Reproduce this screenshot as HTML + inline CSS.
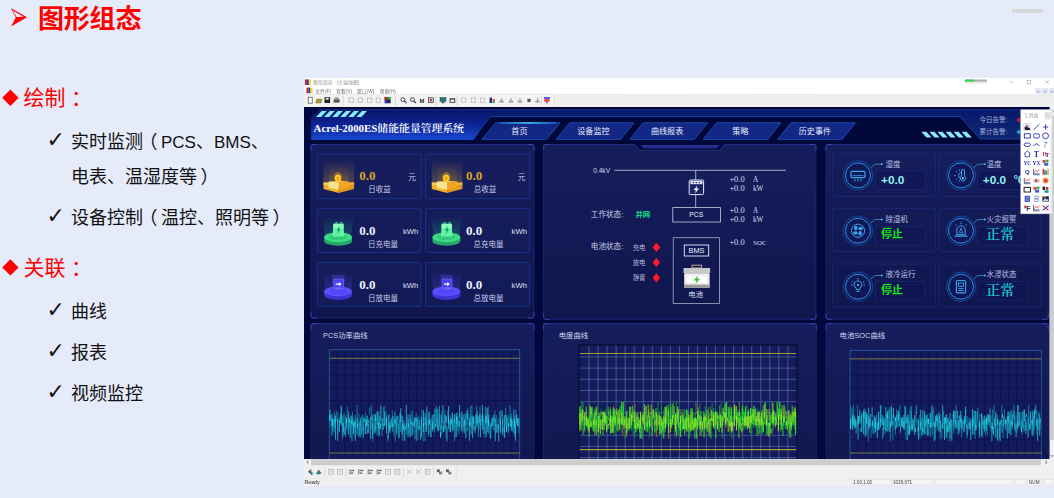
<!DOCTYPE html>
<html lang="zh-CN"><head><meta charset="utf-8"><title>图形组态</title>
<style>
html,body{margin:0;padding:0}
body{width:1054px;height:498px;overflow:hidden;position:relative;background:#e6ebfa;
 font-family:"Liberation Sans","Noto Sans CJK SC",sans-serif;color:#111}
.t{position:absolute;white-space:nowrap;line-height:1}
.h1{left:38px;top:5.5px;font-size:26px;font-weight:bold;color:#ff0000;letter-spacing:-0.2px}
.h2{left:23.5px;font-size:21px;color:#ff0000}
.li{left:71px;font-size:18px;color:#111}
.ck{left:46.5px;font-size:22px;color:#111;font-family:"DejaVu Sans",sans-serif}
.la{font-size:17px}
.pl{position:relative;left:-3.5px}
.pr{position:relative;left:3.5px}
.co{position:relative;left:5.5px}
</style></head><body>
<svg width="40" height="40" viewBox="0 0 40 40" style="position:absolute;left:0;top:0">
 <path d="M11,8.2 L27,17.2 L11,26.6 L15.8,17.4 Z" fill="#ff0000"/>
 <path d="M12.6,10.6 L23.6,16.8 L16.6,16.9 Z" fill="#e6ebfa"/>
</svg>
<div class="t h1">图形组态</div>

<svg width="22" height="200" viewBox="0 0 22 200" style="position:absolute;left:0;top:80px">
 <path d="M10.4,9.6 L18.6,17.8 L10.4,26 L2.2,17.8 Z" fill="#ff0000"/>
 <path d="M10.4,179.2 L18.6,187.4 L10.4,195.6 L2.2,187.4 Z" fill="#ff0000"/>
</svg>
<div class="t h2" style="top:86.5px">绘制<span class="co">：</span></div>
<div class="t ck" style="top:128.5px">✓</div>
<div class="t li" style="top:132.5px">实时监测<span class="pl">（</span><span class="la">PCS</span>、<span class="la">BMS</span>、</div>
<div class="t li" style="top:168.0px">电表、温湿度等<span class="pr">）</span></div>
<div class="t ck" style="top:205.0px">✓</div>
<div class="t li" style="top:209.0px">设备控制<span class="pl">（</span>温控、照明等<span class="pr">）</span></div>
<div class="t h2" style="top:257px">关联<span class="co">：</span></div>
<div class="t ck" style="top:298.5px">✓</div>
<div class="t li" style="top:302.5px">曲线</div>
<div class="t ck" style="top:339.5px">✓</div>
<div class="t li" style="top:343.5px">报表</div>
<div class="t ck" style="top:380.5px">✓</div>
<div class="t li" style="top:384.5px">视频监控</div>
<svg width="1054" height="498" viewBox="0 0 1054 498" style="position:absolute;left:0;top:0;filter:blur(0.35px)">
<defs>
<linearGradient id="gBanner" x1="0" y1="0" x2="0" y2="1">
 <stop offset="0" stop-color="#081264"/><stop offset="0.5" stop-color="#0c2494"/><stop offset="1" stop-color="#1a46d0"/>
</linearGradient>
<linearGradient id="gTop" x1="0" y1="0" x2="0" y2="1">
 <stop offset="0" stop-color="#0a1870"/><stop offset="1" stop-color="#0c1c78"/>
</linearGradient>
<linearGradient id="gAlarm" x1="0" y1="0" x2="0" y2="1">
 <stop offset="0" stop-color="#08186c"/><stop offset="0.25" stop-color="#0a1c6e"/><stop offset="1" stop-color="#0e2674"/>
</linearGradient>
<linearGradient id="gGold" x1="0" y1="0" x2="0" y2="1">
 <stop offset="0" stop-color="#f0b020" stop-opacity="0"/><stop offset="1" stop-color="#f0b020" stop-opacity="0.27"/>
</linearGradient>
<linearGradient id="gGreen" x1="0" y1="0" x2="0" y2="1">
 <stop offset="0" stop-color="#20e090" stop-opacity="0"/><stop offset="1" stop-color="#20c090" stop-opacity="0.28"/>
</linearGradient>
<linearGradient id="gBlue" x1="0" y1="0" x2="0" y2="1">
 <stop offset="0" stop-color="#6050ff" stop-opacity="0"/><stop offset="1" stop-color="#6050ff" stop-opacity="0.3"/>
</linearGradient>
<linearGradient id="gTabTop" x1="0" y1="0" x2="1" y2="0">
 <stop offset="0" stop-color="#2060d0"/><stop offset="0.5" stop-color="#40d0ff"/><stop offset="1" stop-color="#2060d0"/>
</linearGradient>
<linearGradient id="gPanel" gradientUnits="userSpaceOnUse" x1="0" y1="144.5" x2="0" y2="319.3">
 <stop offset="0" stop-color="#151d5c"/><stop offset="1" stop-color="#10164d"/>
</linearGradient>
<linearGradient id="gPanel2" gradientUnits="userSpaceOnUse" x1="0" y1="323.6" x2="0" y2="498.4">
 <stop offset="0" stop-color="#151d5c"/><stop offset="1" stop-color="#10164d"/>
</linearGradient>
<clipPath id="clipContent"><rect x="304.6" y="107.2" width="744.9" height="351.8"/></clipPath>
</defs>
<rect x="1012.00" y="9.00" width="31.00" height="3.90" fill="#d8d8d8" />
<rect x="304.00" y="78.00" width="750.00" height="407.60" fill="#ffffff" />
<rect x="304.80" y="79.40" width="2.10" height="5.60" fill="#e02020" />
<rect x="306.80" y="79.40" width="2.10" height="5.60" fill="#1838d0" />
<rect x="308.80" y="79.40" width="2.10" height="5.60" fill="#f0e020" />
<text x="313.00" y="84.40" font-size="4.9" fill="#999999" font-family='"Liberation Sans","Noto Sans CJK SC",sans-serif' font-weight="normal" text-anchor="start" >图形组态 - [主接线图]</text>
<rect x="964.70" y="79.40" width="22.50" height="2.40" fill="#b0b0b0" rx="1.2" />
<rect x="964.70" y="79.40" width="9.80" height="2.40" fill="#3ad85a" rx="1.2" />
<rect x="965.50" y="82.00" width="22.00" height="2.00" fill="#000000" rx="1" opacity="0.07"/>
<line x1="1009.50" y1="82.00" x2="1013.20" y2="82.00" stroke="#b8b8b8" stroke-width="0.8" />
<rect x="1027.20" y="80.60" width="3.20" height="3.20" fill="none" stroke="#b0b0b0" stroke-width="0.7" />
<line x1="1045.20" y1="80.20" x2="1048.80" y2="83.80" stroke="#b0b0b0" stroke-width="0.7" />
<line x1="1048.80" y1="80.20" x2="1045.20" y2="83.80" stroke="#b0b0b0" stroke-width="0.7" />
<rect x="306.40" y="87.60" width="2.10" height="5.60" fill="#e02020" />
<rect x="308.40" y="87.60" width="2.10" height="5.60" fill="#1838d0" />
<rect x="310.40" y="87.60" width="2.10" height="5.60" fill="#f0e020" />
<text x="315.30" y="92.70" font-size="4.8" fill="#707070" font-family='"Liberation Sans","Noto Sans CJK SC",sans-serif' font-weight="normal" text-anchor="start" >文件(F)</text>
<text x="336.00" y="92.70" font-size="4.8" fill="#707070" font-family='"Liberation Sans","Noto Sans CJK SC",sans-serif' font-weight="normal" text-anchor="start" >查看(V)</text>
<text x="357.00" y="92.70" font-size="4.8" fill="#707070" font-family='"Liberation Sans","Noto Sans CJK SC",sans-serif' font-weight="normal" text-anchor="start" >窗口(W)</text>
<text x="379.70" y="92.70" font-size="4.8" fill="#707070" font-family='"Liberation Sans","Noto Sans CJK SC",sans-serif' font-weight="normal" text-anchor="start" >帮助(H)</text>
<rect x="1035.20" y="88.20" width="6.00" height="5.40" fill="#dfe4ee" />
<line x1="1037.00" y1="91.80" x2="1039.40" y2="91.80" stroke="#8090b8" stroke-width="0.8" />
<rect x="1042.00" y="88.20" width="6.00" height="5.40" fill="#dfe4ee" />
<line x1="1043.80" y1="91.80" x2="1046.20" y2="91.80" stroke="#8090b8" stroke-width="0.8" />
<rect x="1048.80" y="88.20" width="6.00" height="5.40" fill="#dfe4ee" />
<line x1="1050.60" y1="91.80" x2="1053.00" y2="91.80" stroke="#8090b8" stroke-width="0.8" />
<rect x="304.00" y="94.20" width="750.00" height="13.00" fill="#efefef" />
<rect x="304.00" y="94.60" width="250.00" height="12.20" fill="#f2f2f2" />
<line x1="304.00" y1="94.30" x2="1054.00" y2="94.30" stroke="#e2e2e2" stroke-width="0.6" />
<rect x="308.20" y="97.20" width="4.00" height="6.00" fill="#fff" stroke="#444" stroke-width="0.7" />
<polygon points="315.80,102.80 317.00,99.20 321.80,99.20 320.80,102.80" fill="#b89820" stroke="#554400" stroke-width="0.5" />
<rect x="324.50" y="97.20" width="5.60" height="5.80" fill="#222" />
<rect x="325.70" y="97.80" width="3.00" height="2.00" fill="#ddd" />
<rect x="333.60" y="99.20" width="6.00" height="3.40" fill="#555" />
<rect x="334.80" y="97.20" width="3.60" height="2.40" fill="#999" />
<rect x="349.10" y="98.00" width="4.20" height="4.40" fill="none" stroke="#b8b8b8" stroke-width="0.8" />
<rect x="358.10" y="98.00" width="4.20" height="4.40" fill="none" stroke="#b8b8b8" stroke-width="0.8" />
<rect x="367.60" y="98.00" width="4.20" height="4.40" fill="none" stroke="#b8b8b8" stroke-width="0.8" />
<rect x="376.20" y="98.00" width="4.20" height="4.40" fill="none" stroke="#b8b8b8" stroke-width="0.8" />
<rect x="384.60" y="97.20" width="6.00" height="6.00" fill="#223" />
<rect x="384.60" y="97.20" width="2.60" height="2.60" fill="#e02020" />
<rect x="387.80" y="97.20" width="2.80" height="2.60" fill="#20c040" />
<rect x="385.00" y="100.60" width="2.60" height="2.60" fill="#2040e0" />
<circle cx="402.9" cy="99.60000000000001" r="2" fill="#e8e8e8" stroke="#333" stroke-width="0.8"/>
<line x1="404.30" y1="101.00" x2="406.50" y2="103.20" stroke="#3030a0" stroke-width="1.2" />
<circle cx="412.4" cy="99.60000000000001" r="2" fill="#e8e8e8" stroke="#333" stroke-width="0.8"/>
<line x1="413.80" y1="101.00" x2="416.00" y2="103.20" stroke="#3030a0" stroke-width="1.2" />
<text x="419.50" y="102.80" font-size="6" fill="#222" font-family='"Liberation Sans","Noto Sans CJK SC",sans-serif' font-weight="bold" text-anchor="start" >M</text>
<rect x="428.40" y="97.80" width="5.20" height="4.80" fill="#c8c8d8" stroke="#333" stroke-width="0.7" />
<rect x="430.00" y="99.20" width="2.00" height="2.00" fill="#c03030" />
<rect x="440.00" y="97.60" width="6.00" height="3.80" fill="#108080" stroke="#333" stroke-width="0.5" />
<rect x="441.60" y="101.80" width="2.80" height="1.40" fill="#444" />
<rect x="449.60" y="98.20" width="5.60" height="4.80" fill="#444" />
<rect x="450.60" y="99.60" width="3.60" height="2.60" fill="#eee" />
<rect x="461.60" y="98.00" width="4.20" height="4.40" fill="none" stroke="#b8b8b8" stroke-width="0.8" />
<rect x="471.10" y="98.00" width="4.20" height="4.40" fill="none" stroke="#b8b8b8" stroke-width="0.8" />
<rect x="480.60" y="98.00" width="4.20" height="4.40" fill="none" stroke="#b8b8b8" stroke-width="0.8" />
<rect x="489.60" y="97.60" width="2.40" height="5.40" fill="#183080" />
<rect x="492.60" y="99.20" width="2.40" height="2.00" fill="#e04020" />
<rect x="492.60" y="101.40" width="2.40" height="1.60" fill="#20a040" />
<rect x="499.30" y="100.60" width="4.40" height="2.00" fill="#a0a0a0" />
<rect x="500.90" y="98.20" width="1.20" height="2.40" fill="#999" />
<rect x="508.80" y="100.60" width="4.40" height="2.00" fill="#a0a0a0" />
<rect x="510.40" y="98.20" width="1.20" height="2.40" fill="#999" />
<rect x="517.80" y="100.60" width="4.40" height="2.00" fill="#a0a0a0" />
<rect x="519.40" y="98.20" width="1.20" height="2.40" fill="#999" />
<rect x="527.40" y="98.80" width="3.20" height="3.20" fill="#555" />
<rect x="535.40" y="100.60" width="4.40" height="2.00" fill="#a0a0a0" />
<rect x="537.00" y="98.20" width="1.20" height="2.40" fill="#999" />
<rect x="543.90" y="97.20" width="6.00" height="1.60" fill="#3040d0" />
<rect x="544.30" y="99.20" width="5.20" height="2.40" fill="#e03030" />
<rect x="546.30" y="101.60" width="1.20" height="1.80" fill="#3040d0" />
<line x1="343.30" y1="96.00" x2="343.30" y2="106.00" stroke="#d0d0d0" stroke-width="0.8" />
<line x1="395.30" y1="96.00" x2="395.30" y2="106.00" stroke="#d0d0d0" stroke-width="0.8" />
<line x1="436.00" y1="96.00" x2="436.00" y2="106.00" stroke="#d0d0d0" stroke-width="0.8" />
<line x1="457.00" y1="96.00" x2="457.00" y2="106.00" stroke="#d0d0d0" stroke-width="0.8" />
<line x1="541.60" y1="96.00" x2="541.60" y2="106.00" stroke="#d0d0d0" stroke-width="0.8" />
<line x1="554.30" y1="94.80" x2="554.30" y2="107.00" stroke="#dcdcdc" stroke-width="0.8" />
<g clip-path="url(#clipContent)">
<rect x="304.00" y="107.00" width="750.00" height="353.00" fill="#01083c" />
<rect x="304.80" y="107.60" width="744.70" height="36.40" fill="#00083a" />
<polygon points="304.80,108.40 1049.50,108.40 1049.50,138.90 980.00,138.90 960.00,116.60 490.00,116.60 473.00,139.90 311.20,139.90 304.80,139.90" fill="url(#gAlarm)" />
<rect x="304.60" y="107.20" width="744.90" height="2.00" fill="#000536" />
<rect x="304.80" y="108.60" width="6.40" height="31.60" fill="#020840" />
<polygon points="304.80,108.40 319.60,108.40 311.20,118.40" fill="#020840" />
<polyline points="473,139.9 490,116.6 960,116.6 980,138.9 1049.5,138.9" fill="none" stroke="#144a9e" stroke-width="0.9"/>
<polygon points="311.20,117.80 318.50,109.20 495.00,109.20 490.00,116.60 473.00,139.90 311.20,139.90" fill="url(#gBanner)" />
<line x1="318.50" y1="109.80" x2="1049.50" y2="109.80" stroke="#0e3a8e" stroke-width="0.9" />
<polygon points="316.10,116.90 321.70,111.10 326.70,111.10 321.10,116.90" fill="#82efff" />
<polygon points="324.16,116.90 329.76,111.10 334.76,111.10 329.16,116.90" fill="#82efff" />
<polygon points="332.22,116.90 337.82,111.10 342.82,111.10 337.22,116.90" fill="#82efff" />
<polygon points="340.28,116.90 345.88,111.10 350.88,111.10 345.28,116.90" fill="#82efff" />
<polygon points="348.34,116.90 353.94,111.10 358.94,111.10 353.34,116.90" fill="#82efff" />
<polygon points="356.40,116.90 362.00,111.10 367.00,111.10 361.40,116.90" fill="#82efff" />
<text x="313.60" y="131.90" font-size="10.6" fill="#ffffff" font-family='"Liberation Serif","Noto Serif CJK SC",serif' font-weight="600" text-anchor="start" textLength="150.6" lengthAdjust="spacingAndGlyphs">Acrel-2000ES储能能量管理系统</text>
<polygon points="482.00,139.40 495.60,122.80 560.00,122.80 546.60,139.40" fill="#122884" stroke="#1c54bc" stroke-width="0.8" />
<rect x="500.00" y="122.20" width="56.00" height="1.50" fill="url(#gTabTop)" />
<text x="519.40" y="134.40" font-size="8.1" fill="#e8ecff" font-family='"Liberation Sans","Noto Sans CJK SC",sans-serif' font-weight="normal" text-anchor="middle" >首页</text>
<polygon points="556.00,139.40 569.60,122.80 634.00,122.80 620.60,139.40" fill="#122884" stroke="#1c54bc" stroke-width="0.8" />
<text x="593.40" y="134.40" font-size="8.1" fill="#e8ecff" font-family='"Liberation Sans","Noto Sans CJK SC",sans-serif' font-weight="normal" text-anchor="middle" >设备监控</text>
<polygon points="629.70,139.40 643.30,122.80 707.70,122.80 694.30,139.40" fill="#122884" stroke="#1c54bc" stroke-width="0.8" />
<text x="667.10" y="134.40" font-size="8.1" fill="#e8ecff" font-family='"Liberation Sans","Noto Sans CJK SC",sans-serif' font-weight="normal" text-anchor="middle" >曲线报表</text>
<polygon points="703.00,139.40 716.60,122.80 781.00,122.80 767.60,139.40" fill="#122884" stroke="#1c54bc" stroke-width="0.8" />
<text x="740.40" y="134.40" font-size="8.1" fill="#e8ecff" font-family='"Liberation Sans","Noto Sans CJK SC",sans-serif' font-weight="normal" text-anchor="middle" >策略</text>
<polygon points="777.50,139.40 791.10,122.80 855.50,122.80 842.10,139.40" fill="#122884" stroke="#1c54bc" stroke-width="0.8" />
<text x="814.90" y="134.40" font-size="8.1" fill="#e8ecff" font-family='"Liberation Sans","Noto Sans CJK SC",sans-serif' font-weight="normal" text-anchor="middle" >历史事件</text>
<polygon points="921.30,131.70 926.30,131.70 931.50,137.50 926.50,137.50" fill="#8ae8ff" />
<polygon points="929.36,131.70 934.36,131.70 939.56,137.50 934.56,137.50" fill="#8ae8ff" />
<polygon points="937.42,131.70 942.42,131.70 947.62,137.50 942.62,137.50" fill="#8ae8ff" />
<polygon points="945.48,131.70 950.48,131.70 955.68,137.50 950.68,137.50" fill="#8ae8ff" />
<polygon points="953.54,131.70 958.54,131.70 963.74,137.50 958.74,137.50" fill="#8ae8ff" />
<polygon points="961.60,131.70 966.60,131.70 971.80,137.50 966.80,137.50" fill="#8ae8ff" />
<text x="979.40" y="122.10" font-size="6.5" fill="#a8b0dc" font-family='"Liberation Sans","Noto Sans CJK SC",sans-serif' font-weight="normal" text-anchor="start" >今日告警:</text>
<text x="979.40" y="134.20" font-size="6.5" fill="#a8b0dc" font-family='"Liberation Sans","Noto Sans CJK SC",sans-serif' font-weight="normal" text-anchor="start" >累计告警:</text>
<line x1="1016.50" y1="120.00" x2="1021.30" y2="120.00" stroke="#ff2020" stroke-width="1" />
<line x1="1018.90" y1="117.60" x2="1018.90" y2="122.40" stroke="#ff2020" stroke-width="1" />
<line x1="1016.50" y1="132.00" x2="1021.30" y2="132.00" stroke="#20e0e0" stroke-width="1" />
<line x1="1018.90" y1="129.60" x2="1018.90" y2="134.40" stroke="#20e0e0" stroke-width="1" />
<rect x="311.00" y="144.50" width="223.00" height="173.50" fill="url(#gPanel)" stroke="#1c2878" stroke-width="0.8" rx="2" />
<line x1="313.00" y1="144.70" x2="532.00" y2="144.70" stroke="#26348e" stroke-width="0.8" />
<path d="M317.00,144.50 H313.00 Q311.00,144.50 311.00,146.50 V150.50" fill="none" stroke="#3a48b0" stroke-width="0.9"/>
<path d="M528.00,144.50 H532.00 Q534.00,144.50 534.00,146.50 V150.50" fill="none" stroke="#3a48b0" stroke-width="0.9"/>
<path d="M317.00,318.00 H313.00 Q311.00,318.00 311.00,316.00 V312.00" fill="none" stroke="#3a48b0" stroke-width="0.9"/>
<path d="M528.00,318.00 H532.00 Q534.00,318.00 534.00,316.00 V312.00" fill="none" stroke="#3a48b0" stroke-width="0.9"/>
<rect x="543.60" y="144.50" width="272.40" height="174.80" fill="url(#gPanel)" stroke="#1c2878" stroke-width="0.8" rx="2" />
<line x1="545.60" y1="144.70" x2="814.00" y2="144.70" stroke="#26348e" stroke-width="0.8" />
<path d="M549.60,144.50 H545.60 Q543.60,144.50 543.60,146.50 V150.50" fill="none" stroke="#3a48b0" stroke-width="0.9"/>
<path d="M810.00,144.50 H814.00 Q816.00,144.50 816.00,146.50 V150.50" fill="none" stroke="#3a48b0" stroke-width="0.9"/>
<path d="M549.60,319.30 H545.60 Q543.60,319.30 543.60,317.30 V313.30" fill="none" stroke="#3a48b0" stroke-width="0.9"/>
<path d="M810.00,319.30 H814.00 Q816.00,319.30 816.00,317.30 V313.30" fill="none" stroke="#3a48b0" stroke-width="0.9"/>
<rect x="826.00" y="144.50" width="222.20" height="174.80" fill="url(#gPanel)" stroke="#1c2878" stroke-width="0.8" rx="2" />
<line x1="828.00" y1="144.70" x2="1046.20" y2="144.70" stroke="#26348e" stroke-width="0.8" />
<path d="M832.00,144.50 H828.00 Q826.00,144.50 826.00,146.50 V150.50" fill="none" stroke="#3a48b0" stroke-width="0.9"/>
<path d="M1042.20,144.50 H1046.20 Q1048.20,144.50 1048.20,146.50 V150.50" fill="none" stroke="#3a48b0" stroke-width="0.9"/>
<path d="M832.00,319.30 H828.00 Q826.00,319.30 826.00,317.30 V313.30" fill="none" stroke="#3a48b0" stroke-width="0.9"/>
<path d="M1042.20,319.30 H1046.20 Q1048.20,319.30 1048.20,317.30 V313.30" fill="none" stroke="#3a48b0" stroke-width="0.9"/>
<rect x="311.00" y="323.60" width="223.00" height="146.40" fill="url(#gPanel2)" stroke="#1c2878" stroke-width="0.8" rx="2" />
<line x1="313.00" y1="323.80" x2="532.00" y2="323.80" stroke="#26348e" stroke-width="0.8" />
<path d="M317.00,323.60 H313.00 Q311.00,323.60 311.00,325.60 V329.60" fill="none" stroke="#3a48b0" stroke-width="0.9"/>
<path d="M528.00,323.60 H532.00 Q534.00,323.60 534.00,325.60 V329.60" fill="none" stroke="#3a48b0" stroke-width="0.9"/>
<path d="M317.00,470.00 H313.00 Q311.00,470.00 311.00,468.00 V464.00" fill="none" stroke="#3a48b0" stroke-width="0.9"/>
<path d="M528.00,470.00 H532.00 Q534.00,470.00 534.00,468.00 V464.00" fill="none" stroke="#3a48b0" stroke-width="0.9"/>
<rect x="543.60" y="323.60" width="272.70" height="146.40" fill="url(#gPanel2)" stroke="#1c2878" stroke-width="0.8" rx="2" />
<line x1="545.60" y1="323.80" x2="814.30" y2="323.80" stroke="#26348e" stroke-width="0.8" />
<path d="M549.60,323.60 H545.60 Q543.60,323.60 543.60,325.60 V329.60" fill="none" stroke="#3a48b0" stroke-width="0.9"/>
<path d="M810.30,323.60 H814.30 Q816.30,323.60 816.30,325.60 V329.60" fill="none" stroke="#3a48b0" stroke-width="0.9"/>
<path d="M549.60,470.00 H545.60 Q543.60,470.00 543.60,468.00 V464.00" fill="none" stroke="#3a48b0" stroke-width="0.9"/>
<path d="M810.30,470.00 H814.30 Q816.30,470.00 816.30,468.00 V464.00" fill="none" stroke="#3a48b0" stroke-width="0.9"/>
<rect x="826.00" y="323.60" width="222.20" height="146.40" fill="url(#gPanel2)" stroke="#1c2878" stroke-width="0.8" rx="2" />
<line x1="828.00" y1="323.80" x2="1046.20" y2="323.80" stroke="#26348e" stroke-width="0.8" />
<path d="M832.00,323.60 H828.00 Q826.00,323.60 826.00,325.60 V329.60" fill="none" stroke="#3a48b0" stroke-width="0.9"/>
<path d="M1042.20,323.60 H1046.20 Q1048.20,323.60 1048.20,325.60 V329.60" fill="none" stroke="#3a48b0" stroke-width="0.9"/>
<path d="M832.00,470.00 H828.00 Q826.00,470.00 826.00,468.00 V464.00" fill="none" stroke="#3a48b0" stroke-width="0.9"/>
<path d="M1042.20,470.00 H1046.20 Q1048.20,470.00 1048.20,468.00 V464.00" fill="none" stroke="#3a48b0" stroke-width="0.9"/>
<polygon points="634.40,143.60 725.20,143.60 719.20,150.00 640.40,150.00" fill="#01083c" />
<polyline points="634.4,144.5 640.2,150.1 719.4,150.1 725.2,144.5" fill="none" stroke="#1f2f86" stroke-width="0.9"/>
<polygon points="640.60,145.00 719.60,145.00 716.60,148.30 643.60,148.30" fill="#272f8c" />
<rect x="317.30" y="154.20" width="103.70" height="44.50" fill="#161e5e" stroke="#1d3896" stroke-width="0.8" rx="1.8" fill-opacity="0.6"/>
<rect x="323.50" y="158.90" width="30.6" height="24" fill="url(#gGold)"/>
<rect x="329.20" y="162.90" width="19.2" height="19" fill="url(#gGold)" opacity="0.6"/>
<polygon points="323.50,182.50 338.80,181.60 354.10,182.50 338.80,183.50" fill="#f8dc80" opacity="0.7"/>
<polygon points="323.50,182.50 338.80,183.50 338.80,192.90 323.50,188.90" fill="#eeb228" />
<polygon points="354.10,182.50 338.80,183.50 338.80,192.90 354.10,188.90" fill="#e0961a" />
<polygon points="323.50,182.50 338.80,183.50 338.80,186.10 323.50,184.70" fill="#f6d064" />
<polygon points="354.10,182.50 338.80,183.50 338.80,186.10 354.10,184.70" fill="#eeb43c" />
<polygon points="328.60,181.60 338.80,180.80 349.00,181.60 338.80,182.50" fill="#f4c646" />
<polygon points="328.60,181.60 338.80,182.50 338.80,189.80 328.60,188.00" fill="#f8e294" />
<polygon points="349.00,181.60 338.80,182.50 338.80,189.80 349.00,188.00" fill="#f2a422" />
<ellipse cx="337.90" cy="177.30" rx="4.2" ry="5.2" fill="#f8b820" opacity="0.35"/>
<ellipse cx="337.90" cy="178.30" rx="3.1" ry="3.7" fill="#ffc81e"/>
<ellipse cx="337.90" cy="178.30" rx="1.2" ry="1.9" fill="#f09a10"/>
<text x="359.30" y="180.40" font-size="13" fill="#d9a520" font-family='"Liberation Serif","Noto Serif CJK SC",serif' font-weight="bold" text-anchor="start" >0.0</text>
<text x="408.30" y="180.00" font-size="7.8" fill="#c2c7e6" font-family='"Liberation Sans","Noto Sans CJK SC",sans-serif' font-weight="normal" text-anchor="start" >元</text>
<text x="368.30" y="192.40" font-size="7.5" fill="#c6cbea" font-family='"Liberation Sans","Noto Sans CJK SC",sans-serif' font-weight="normal" text-anchor="start" >日收益</text>
<rect x="425.60" y="154.20" width="103.90" height="44.50" fill="#161e5e" stroke="#1d3896" stroke-width="0.8" rx="1.8" fill-opacity="0.6"/>
<rect x="431.80" y="158.90" width="30.6" height="24" fill="url(#gGold)"/>
<rect x="437.50" y="162.90" width="19.2" height="19" fill="url(#gGold)" opacity="0.6"/>
<polygon points="431.80,182.50 447.10,181.60 462.40,182.50 447.10,183.50" fill="#f8dc80" opacity="0.7"/>
<polygon points="431.80,182.50 447.10,183.50 447.10,192.90 431.80,188.90" fill="#eeb228" />
<polygon points="462.40,182.50 447.10,183.50 447.10,192.90 462.40,188.90" fill="#e0961a" />
<polygon points="431.80,182.50 447.10,183.50 447.10,186.10 431.80,184.70" fill="#f6d064" />
<polygon points="462.40,182.50 447.10,183.50 447.10,186.10 462.40,184.70" fill="#eeb43c" />
<polygon points="436.90,181.60 447.10,180.80 457.30,181.60 447.10,182.50" fill="#f4c646" />
<polygon points="436.90,181.60 447.10,182.50 447.10,189.80 436.90,188.00" fill="#f8e294" />
<polygon points="457.30,181.60 447.10,182.50 447.10,189.80 457.30,188.00" fill="#f2a422" />
<ellipse cx="446.20" cy="177.30" rx="4.2" ry="5.2" fill="#f8b820" opacity="0.35"/>
<ellipse cx="446.20" cy="178.30" rx="3.1" ry="3.7" fill="#ffc81e"/>
<ellipse cx="446.20" cy="178.30" rx="1.2" ry="1.9" fill="#f09a10"/>
<text x="466.00" y="180.40" font-size="13" fill="#d9a520" font-family='"Liberation Serif","Noto Serif CJK SC",serif' font-weight="bold" text-anchor="start" >0.0</text>
<text x="517.80" y="180.00" font-size="7.8" fill="#c2c7e6" font-family='"Liberation Sans","Noto Sans CJK SC",sans-serif' font-weight="normal" text-anchor="start" >元</text>
<text x="473.80" y="192.40" font-size="7.5" fill="#c6cbea" font-family='"Liberation Sans","Noto Sans CJK SC",sans-serif' font-weight="normal" text-anchor="start" >总收益</text>
<rect x="317.30" y="208.30" width="103.70" height="44.30" fill="#161e5e" stroke="#1d3896" stroke-width="0.8" rx="1.8" fill-opacity="0.6"/>
<polygon points="322.30,216.10 353.90,216.10 350.60,237.30 325.60,237.30" fill="url(#gGreen)" />
<ellipse cx="338.10" cy="240.90" rx="13.9" ry="4.9" fill="#26a868"/>
<rect x="324.20" y="237.30" width="27.8" height="3.6" fill="#26a868"/>
<ellipse cx="338.10" cy="237.30" rx="13.9" ry="4.9" fill="#3ddc86"/>
<ellipse cx="338.10" cy="237.10" rx="9" ry="2.9" fill="#35c87a"/>
<polygon points="333.40,223.70 343.40,223.70 344.30,236.40 332.50,236.40" fill="#62f2a6" />
<polygon points="333.40,223.70 343.40,223.70 343.70,228.30 333.10,228.30" fill="#8afac0" />
<rect x="335.50" y="221.90" width="1.80" height="1.80" fill="#34d88a" />
<rect x="340.30" y="221.90" width="1.80" height="1.80" fill="#34d88a" />
<polygon points="339.50,225.70 336.50,230.50 338.30,230.50 337.70,233.90 340.70,229.10 338.90,229.10" fill="#1f9c60" />
<text x="359.30" y="234.50" font-size="13" fill="#eef0ff" font-family='"Liberation Serif","Noto Serif CJK SC",serif' font-weight="bold" text-anchor="start" >0.0</text>
<text x="402.90" y="234.10" font-size="7.7" fill="#dde0f6" font-family='"Liberation Sans","Noto Sans CJK SC",sans-serif' font-weight="normal" text-anchor="start" >kWh</text>
<text x="367.90" y="246.70" font-size="7.5" fill="#c6cbea" font-family='"Liberation Sans","Noto Sans CJK SC",sans-serif' font-weight="normal" text-anchor="start" >日充电量</text>
<rect x="425.60" y="208.30" width="103.90" height="44.30" fill="#161e5e" stroke="#1d3896" stroke-width="0.8" rx="1.8" fill-opacity="0.6"/>
<polygon points="430.60,216.10 462.20,216.10 458.90,237.30 433.90,237.30" fill="url(#gGreen)" />
<ellipse cx="446.40" cy="240.90" rx="13.9" ry="4.9" fill="#26a868"/>
<rect x="432.50" y="237.30" width="27.8" height="3.6" fill="#26a868"/>
<ellipse cx="446.40" cy="237.30" rx="13.9" ry="4.9" fill="#3ddc86"/>
<ellipse cx="446.40" cy="237.10" rx="9" ry="2.9" fill="#35c87a"/>
<polygon points="441.70,223.70 451.70,223.70 452.60,236.40 440.80,236.40" fill="#62f2a6" />
<polygon points="441.70,223.70 451.70,223.70 452.00,228.30 441.40,228.30" fill="#8afac0" />
<rect x="443.80" y="221.90" width="1.80" height="1.80" fill="#34d88a" />
<rect x="448.60" y="221.90" width="1.80" height="1.80" fill="#34d88a" />
<polygon points="447.80,225.70 444.80,230.50 446.60,230.50 446.00,233.90 449.00,229.10 447.20,229.10" fill="#1f9c60" />
<text x="466.00" y="234.50" font-size="13" fill="#eef0ff" font-family='"Liberation Serif","Noto Serif CJK SC",serif' font-weight="bold" text-anchor="start" >0.0</text>
<text x="511.60" y="234.10" font-size="7.7" fill="#dde0f6" font-family='"Liberation Sans","Noto Sans CJK SC",sans-serif' font-weight="normal" text-anchor="start" >kWh</text>
<text x="473.60" y="246.70" font-size="7.5" fill="#c6cbea" font-family='"Liberation Sans","Noto Sans CJK SC",sans-serif' font-weight="normal" text-anchor="start" >总充电量</text>
<rect x="317.30" y="262.40" width="103.70" height="43.90" fill="#161e5e" stroke="#1d3896" stroke-width="0.8" rx="1.8" fill-opacity="0.6"/>
<polygon points="322.30,270.20 353.90,270.20 350.60,291.40 325.60,291.40" fill="url(#gBlue)" />
<ellipse cx="338.10" cy="295.00" rx="13.9" ry="4.9" fill="#4232d4"/>
<rect x="324.20" y="291.40" width="27.8" height="3.6" fill="#4232d4"/>
<ellipse cx="338.10" cy="291.40" rx="13.9" ry="4.9" fill="#5c4eff"/>
<ellipse cx="338.10" cy="291.20" rx="9" ry="2.9" fill="#5444f4"/>
<rect x="332.10" y="274.80" width="12.60" height="8.60" fill="#6a5cff" opacity="0.25"/>
<rect x="333.80" y="279.00" width="9.70" height="10.00" fill="#4c3ef2" stroke="#7a70ff" stroke-width="0.6" rx="0.6" />
<line x1="335.10" y1="288.00" x2="342.30" y2="288.00" stroke="#8a9cff" stroke-width="0.7" />
<path d="M335.70,283.50 h3.2 v-1.5 l2.6,2.1 l-2.6,2.1 v-1.5 h-3.2z" fill="#fff"/>
<text x="359.30" y="288.60" font-size="13" fill="#eef0ff" font-family='"Liberation Serif","Noto Serif CJK SC",serif' font-weight="bold" text-anchor="start" >0.0</text>
<text x="402.90" y="288.20" font-size="7.7" fill="#dde0f6" font-family='"Liberation Sans","Noto Sans CJK SC",sans-serif' font-weight="normal" text-anchor="start" >kWh</text>
<text x="367.90" y="300.80" font-size="7.5" fill="#c6cbea" font-family='"Liberation Sans","Noto Sans CJK SC",sans-serif' font-weight="normal" text-anchor="start" >日放电量</text>
<rect x="425.60" y="262.40" width="103.90" height="43.90" fill="#161e5e" stroke="#1d3896" stroke-width="0.8" rx="1.8" fill-opacity="0.6"/>
<polygon points="430.60,270.20 462.20,270.20 458.90,291.40 433.90,291.40" fill="url(#gBlue)" />
<ellipse cx="446.40" cy="295.00" rx="13.9" ry="4.9" fill="#4232d4"/>
<rect x="432.50" y="291.40" width="27.8" height="3.6" fill="#4232d4"/>
<ellipse cx="446.40" cy="291.40" rx="13.9" ry="4.9" fill="#5c4eff"/>
<ellipse cx="446.40" cy="291.20" rx="9" ry="2.9" fill="#5444f4"/>
<rect x="440.40" y="274.80" width="12.60" height="8.60" fill="#6a5cff" opacity="0.25"/>
<rect x="442.10" y="279.00" width="9.70" height="10.00" fill="#4c3ef2" stroke="#7a70ff" stroke-width="0.6" rx="0.6" />
<line x1="443.40" y1="288.00" x2="450.60" y2="288.00" stroke="#8a9cff" stroke-width="0.7" />
<path d="M444.00,283.50 h3.2 v-1.5 l2.6,2.1 l-2.6,2.1 v-1.5 h-3.2z" fill="#fff"/>
<text x="466.00" y="288.60" font-size="13" fill="#eef0ff" font-family='"Liberation Serif","Noto Serif CJK SC",serif' font-weight="bold" text-anchor="start" >0.0</text>
<text x="511.60" y="288.20" font-size="7.7" fill="#dde0f6" font-family='"Liberation Sans","Noto Sans CJK SC",sans-serif' font-weight="normal" text-anchor="start" >kWh</text>
<text x="473.60" y="300.80" font-size="7.5" fill="#c6cbea" font-family='"Liberation Sans","Noto Sans CJK SC",sans-serif' font-weight="normal" text-anchor="start" >总放电量</text>
<text x="593.20" y="172.70" font-size="6.6" fill="#d0d4ea" font-family='"Liberation Sans","Noto Sans CJK SC",sans-serif' font-weight="normal" text-anchor="start" >0.4kV</text>
<line x1="614.40" y1="170.30" x2="786.00" y2="170.30" stroke="#c8cce0" stroke-width="0.8" />
<line x1="695.70" y1="170.30" x2="695.70" y2="180.00" stroke="#c8cce0" stroke-width="0.8" />
<line x1="695.70" y1="194.60" x2="695.70" y2="207.60" stroke="#c8cce0" stroke-width="0.8" />
<rect x="689.20" y="180.00" width="14.40" height="14.60" fill="#1a2268" stroke="#e8ecff" stroke-width="1" rx="1.2" />
<rect x="690.40" y="181.00" width="12.00" height="3.20" fill="#e8ecff" />
<rect x="692.60" y="182.00" width="1.40" height="1.20" fill="#1a2268" />
<rect x="695.60" y="182.00" width="1.40" height="1.20" fill="#1a2268" />
<rect x="698.60" y="182.00" width="1.40" height="1.20" fill="#1a2268" />
<polygon points="697.40,185.60 693.60,190.20 696.00,190.20 695.00,193.40 699.00,188.60 696.60,188.60" fill="#fff" />
<rect x="672.80" y="207.60" width="47.70" height="14.40" fill="none" stroke="#c8cce0" stroke-width="0.8" />
<text x="696.20" y="217.40" font-size="6.8" fill="#f0f2ff" font-family='"Liberation Sans","Noto Sans CJK SC",sans-serif' font-weight="normal" text-anchor="middle" >PCS</text>
<text x="729.40" y="182.00" font-size="8.4" fill="#d8dcf0" font-family='"Liberation Serif","Noto Serif CJK SC",serif' font-weight="normal" text-anchor="start" >+0.0</text>
<text x="753.00" y="182.00" font-size="7.2" fill="#d8dcf0" font-family='"Liberation Serif","Noto Serif CJK SC",serif' font-weight="normal" text-anchor="start" >A</text>
<text x="729.40" y="190.70" font-size="8.4" fill="#d8dcf0" font-family='"Liberation Serif","Noto Serif CJK SC",serif' font-weight="normal" text-anchor="start" >+0.0</text>
<text x="753.00" y="190.70" font-size="7.2" fill="#d8dcf0" font-family='"Liberation Serif","Noto Serif CJK SC",serif' font-weight="normal" text-anchor="start" >kW</text>
<text x="729.40" y="213.30" font-size="8.4" fill="#d8dcf0" font-family='"Liberation Serif","Noto Serif CJK SC",serif' font-weight="normal" text-anchor="start" >+0.0</text>
<text x="753.00" y="213.30" font-size="7.2" fill="#d8dcf0" font-family='"Liberation Serif","Noto Serif CJK SC",serif' font-weight="normal" text-anchor="start" >A</text>
<text x="729.40" y="222.10" font-size="8.4" fill="#d8dcf0" font-family='"Liberation Serif","Noto Serif CJK SC",serif' font-weight="normal" text-anchor="start" >+0.0</text>
<text x="753.00" y="222.10" font-size="7.2" fill="#d8dcf0" font-family='"Liberation Serif","Noto Serif CJK SC",serif' font-weight="normal" text-anchor="start" >kW</text>
<text x="729.40" y="245.00" font-size="8.4" fill="#d8dcf0" font-family='"Liberation Serif","Noto Serif CJK SC",serif' font-weight="normal" text-anchor="start" >+0.0</text>
<text x="753.00" y="245.00" font-size="7" fill="#d8dcf0" font-family='"Liberation Serif","Noto Serif CJK SC",serif' font-weight="normal" text-anchor="start" >SOC</text>
<text x="590.80" y="216.50" font-size="7.6" fill="#ccd0ec" font-family='"Liberation Sans","Noto Sans CJK SC",sans-serif' font-weight="normal" text-anchor="start" >工作状态:</text>
<text x="635.40" y="217.40" font-size="7.4" fill="#10e088" font-family='"Liberation Sans","Noto Sans CJK SC",sans-serif' font-weight="bold" text-anchor="start" >并网</text>
<text x="590.80" y="248.80" font-size="7.6" fill="#ccd0ec" font-family='"Liberation Sans","Noto Sans CJK SC",sans-serif' font-weight="normal" text-anchor="start" >电池状态:</text>
<text x="632.70" y="249.70" font-size="6.4" fill="#b8bcdc" font-family='"Liberation Sans","Noto Sans CJK SC",sans-serif' font-weight="normal" text-anchor="start" >充电</text>
<polygon points="656.40,242.70 660.20,247.30 656.40,251.90 652.60,247.30" fill="#ff1a2a" />
<text x="632.70" y="264.90" font-size="6.4" fill="#b8bcdc" font-family='"Liberation Sans","Noto Sans CJK SC",sans-serif' font-weight="normal" text-anchor="start" >放电</text>
<polygon points="656.40,257.90 660.20,262.50 656.40,267.10 652.60,262.50" fill="#ff1a2a" />
<text x="632.70" y="280.20" font-size="6.4" fill="#b8bcdc" font-family='"Liberation Sans","Noto Sans CJK SC",sans-serif' font-weight="normal" text-anchor="start" >静置</text>
<polygon points="656.40,273.20 660.20,277.80 656.40,282.40 652.60,277.80" fill="#ff1a2a" />
<rect x="673.20" y="237.70" width="46.20" height="65.70" fill="none" stroke="#a8acc8" stroke-width="0.8" />
<rect x="684.30" y="245.00" width="24.40" height="11.00" fill="none" stroke="#e8ecff" stroke-width="0.9" />
<text x="696.50" y="253.40" font-size="7.4" fill="#f0f2ff" font-family='"Liberation Sans","Noto Sans CJK SC",sans-serif' font-weight="normal" text-anchor="middle" >BMS</text>
<rect x="692.00" y="265.20" width="9.60" height="2.80" fill="none" stroke="#b8a890" stroke-width="1" />
<rect x="683.50" y="268.00" width="26.70" height="5.20" fill="#c8c8c8" rx="0.8" />
<rect x="684.20" y="273.20" width="25.40" height="14.60" fill="#f2f2f2" rx="0.8" />
<rect x="684.20" y="284.60" width="25.40" height="3.20" fill="#9a9a9a" />
<rect x="686.40" y="275.20" width="20.80" height="8.60" fill="#ffffff" stroke="#d0d0d0" stroke-width="0.4" />
<polygon points="698.20,275.60 693.60,280.60 696.60,280.60 695.40,284.00 700.20,278.80 697.40,278.80" fill="#2fc030" />
<text x="695.70" y="297.30" font-size="7.4" fill="#dfe2f6" font-family='"Liberation Sans","Noto Sans CJK SC",sans-serif' font-weight="normal" text-anchor="middle" >电池</text>
<rect x="832.60" y="153.40" width="102.70" height="43.10" fill="none" stroke="#1a2c78" stroke-width="0.8" rx="1.6" />
<rect x="875.20" y="171.00" width="49.80" height="18.50" fill="#0e1450" stroke="#19297a" stroke-width="0.7" fill-opacity="0.45"/>
<circle cx="858.0" cy="175.4" r="14.7" fill="none" stroke="#124a9a" stroke-width="1"/>
<circle cx="858.0" cy="175.4" r="12.5" fill="#111858" stroke="#2b90e6" stroke-width="1"/>
<path d="M870.60,167.80 l3.2,-2.8 q0.9,-0.8 2,-0.8 h5.6" fill="none" stroke="#3a9cd0" stroke-width="0.8"/>
<circle cx="881.80" cy="164.20" r="0.9" fill="#58c8f0"/>
<rect x="851.00" y="171.40" width="14.00" height="6.20" fill="none" stroke="#3aa6ee" stroke-width="1.2" rx="1" />
<line x1="852.60" y1="175.60" x2="863.40" y2="175.60" stroke="#3aa6ee" stroke-width="0.8" />
<line x1="855.00" y1="179.00" x2="855.00" y2="181.40" stroke="#3aa6ee" stroke-width="1" />
<line x1="858.00" y1="179.00" x2="858.00" y2="181.40" stroke="#3aa6ee" stroke-width="1" />
<line x1="861.00" y1="179.00" x2="861.00" y2="181.40" stroke="#3aa6ee" stroke-width="1" />
<text x="885.40" y="166.80" font-size="7.5" fill="#bcc0e4" font-family='"Liberation Sans","Noto Sans CJK SC",sans-serif' font-weight="normal" text-anchor="start" >湿度</text>
<text x="881.00" y="183.80" font-size="11.8" fill="#92f2f2" font-family='"Liberation Sans","Noto Sans CJK SC",sans-serif' font-weight="bold" text-anchor="start" >+0.0</text>
<rect x="939.20" y="153.40" width="102.40" height="43.10" fill="none" stroke="#1a2c78" stroke-width="0.8" rx="1.6" />
<rect x="977.80" y="171.00" width="49.80" height="18.50" fill="#0e1450" stroke="#19297a" stroke-width="0.7" fill-opacity="0.45"/>
<circle cx="961.0" cy="175.4" r="14.7" fill="none" stroke="#124a9a" stroke-width="1"/>
<circle cx="961.0" cy="175.4" r="12.5" fill="#111858" stroke="#2b90e6" stroke-width="1"/>
<path d="M973.60,167.80 l3.2,-2.8 q0.9,-0.8 2,-0.8 h5.6" fill="none" stroke="#3a9cd0" stroke-width="0.8"/>
<circle cx="984.80" cy="164.20" r="0.9" fill="#58c8f0"/>
<path d="M961.50,171.00 a1.5,1.5 0 0 1 3,0 v4.9 a2.7,2.7 0 1 1 -3,0 z" fill="none" stroke="#3aa6ee" stroke-width="1"/>
<circle cx="963.00" cy="178.20" r="1.1" fill="#5ad0ff"/>
<path d="M960.80,172.40 a3.4,3.4 0 0 0 0,6.4" fill="none" stroke="#3aa6ee" stroke-width="1"/>
<line x1="957.15" y1="178.85" x2="956.02" y2="179.98" stroke="#3aa6ee" stroke-width="0.9" />
<line x1="955.80" y1="175.60" x2="954.20" y2="175.60" stroke="#3aa6ee" stroke-width="0.9" />
<line x1="957.15" y1="172.35" x2="956.02" y2="171.22" stroke="#3aa6ee" stroke-width="0.9" />
<line x1="959.60" y1="180.13" x2="959.32" y2="181.71" stroke="#3aa6ee" stroke-width="0.9" />
<line x1="959.60" y1="171.07" x2="959.32" y2="169.49" stroke="#3aa6ee" stroke-width="0.9" />
<text x="986.40" y="166.80" font-size="7.5" fill="#bcc0e4" font-family='"Liberation Sans","Noto Sans CJK SC",sans-serif' font-weight="normal" text-anchor="start" >温度</text>
<text x="982.80" y="183.80" font-size="11.8" fill="#92f2f2" font-family='"Liberation Sans","Noto Sans CJK SC",sans-serif' font-weight="bold" text-anchor="start" >+0.0</text>
<text x="1013.80" y="183.80" font-size="11" fill="#7ee8f0" font-family='"Liberation Sans","Noto Sans CJK SC",sans-serif' font-weight="bold" text-anchor="start" >℃</text>
<rect x="832.60" y="208.70" width="102.70" height="42.90" fill="none" stroke="#1a2c78" stroke-width="0.8" rx="1.6" />
<rect x="875.20" y="226.30" width="49.80" height="18.50" fill="#0e1450" stroke="#19297a" stroke-width="0.7" fill-opacity="0.45"/>
<circle cx="858.0" cy="230.7" r="14.7" fill="none" stroke="#124a9a" stroke-width="1"/>
<circle cx="858.0" cy="230.7" r="12.5" fill="#111858" stroke="#2b90e6" stroke-width="1"/>
<path d="M870.60,223.10 l3.2,-2.8 q0.9,-0.8 2,-0.8 h5.6" fill="none" stroke="#3a9cd0" stroke-width="0.8"/>
<circle cx="881.80" cy="219.50" r="0.9" fill="#58c8f0"/>
<circle cx="858.0" cy="230.7" r="6.6" fill="none" stroke="#3aa6ee" stroke-width="1"/>
<ellipse cx="860.6" cy="228.5" rx="2.3" ry="1.7" fill="#3aa6ee" transform="rotate(0 858.0 230.7)"/>
<ellipse cx="860.6" cy="228.5" rx="2.3" ry="1.7" fill="#3aa6ee" transform="rotate(90 858.0 230.7)"/>
<ellipse cx="860.6" cy="228.5" rx="2.3" ry="1.7" fill="#3aa6ee" transform="rotate(180 858.0 230.7)"/>
<ellipse cx="860.6" cy="228.5" rx="2.3" ry="1.7" fill="#3aa6ee" transform="rotate(270 858.0 230.7)"/>
<circle cx="858.0" cy="230.7" r="1" fill="#121a60"/>
<text x="885.40" y="222.10" font-size="7.5" fill="#bcc0e4" font-family='"Liberation Sans","Noto Sans CJK SC",sans-serif' font-weight="normal" text-anchor="start" >除湿机</text>
<text x="881.20" y="238.30" font-size="10.8" fill="#10ee10" font-family='"Liberation Sans","Noto Sans CJK SC",sans-serif' font-weight="bold" text-anchor="start" >停止</text>
<rect x="939.20" y="208.70" width="102.40" height="42.90" fill="none" stroke="#1a2c78" stroke-width="0.8" rx="1.6" />
<rect x="977.80" y="226.30" width="49.80" height="18.50" fill="#0e1450" stroke="#19297a" stroke-width="0.7" fill-opacity="0.45"/>
<circle cx="961.0" cy="230.7" r="14.7" fill="none" stroke="#124a9a" stroke-width="1"/>
<circle cx="961.0" cy="230.7" r="12.5" fill="#111858" stroke="#2b90e6" stroke-width="1"/>
<path d="M973.60,223.10 l3.2,-2.8 q0.9,-0.8 2,-0.8 h5.6" fill="none" stroke="#3a9cd0" stroke-width="0.8"/>
<circle cx="984.80" cy="219.50" r="0.9" fill="#58c8f0"/>
<path d="M956.8,234.7 v-4.6 a4.2,4.2 0 0 1 8.4,0 v4.6 z" fill="none" stroke="#3aa6ee" stroke-width="1"/>
<line x1="954.60" y1="236.10" x2="967.40" y2="236.10" stroke="#3aa6ee" stroke-width="1.3" />
<polygon points="961.00,228.10 959.20,232.70 962.80,232.70" fill="none" stroke="#3aa6ee" stroke-width="0.8" />
<line x1="961.00" y1="224.10" x2="961.00" y2="222.10" stroke="#3aa6ee" stroke-width="0.9" />
<line x1="956.76" y1="225.86" x2="955.34" y2="224.44" stroke="#3aa6ee" stroke-width="0.9" />
<line x1="965.24" y1="225.86" x2="966.66" y2="224.44" stroke="#3aa6ee" stroke-width="0.9" />
<text x="986.40" y="222.10" font-size="7.5" fill="#bcc0e4" font-family='"Liberation Sans","Noto Sans CJK SC",sans-serif' font-weight="normal" text-anchor="start" >火灾报警</text>
<text x="986.00" y="239.30" font-size="14.2" fill="#1fc4d2" font-family='"Liberation Serif","Noto Serif CJK SC",serif' font-weight="600" text-anchor="start" >正常</text>
<rect x="832.60" y="264.00" width="102.70" height="43.20" fill="none" stroke="#1a2c78" stroke-width="0.8" rx="1.6" />
<rect x="875.20" y="281.60" width="49.80" height="18.50" fill="#0e1450" stroke="#19297a" stroke-width="0.7" fill-opacity="0.45"/>
<circle cx="858.0" cy="286.7" r="14.7" fill="none" stroke="#124a9a" stroke-width="1"/>
<circle cx="858.0" cy="286.7" r="12.5" fill="#111858" stroke="#2b90e6" stroke-width="1"/>
<path d="M870.60,279.10 l3.2,-2.8 q0.9,-0.8 2,-0.8 h5.6" fill="none" stroke="#3a9cd0" stroke-width="0.8"/>
<circle cx="881.80" cy="275.50" r="0.9" fill="#58c8f0"/>
<path d="M856.2,289.7 v-1.6 a3.8,3.8 0 1 1 3.6,0 v1.6 z" fill="none" stroke="#3aa6ee" stroke-width="1"/>
<line x1="856.60" y1="291.50" x2="859.40" y2="291.50" stroke="#3aa6ee" stroke-width="0.9" />
<circle cx="858.0" cy="285.09999999999997" r="1" fill="#5ad0ff"/>
<line x1="858.00" y1="279.70" x2="858.00" y2="277.90" stroke="#3aa6ee" stroke-width="0.9" />
<line x1="853.32" y1="282.40" x2="851.76" y2="281.50" stroke="#3aa6ee" stroke-width="0.9" />
<line x1="862.68" y1="282.40" x2="864.24" y2="281.50" stroke="#3aa6ee" stroke-width="0.9" />
<line x1="852.60" y1="285.10" x2="850.80" y2="285.10" stroke="#3aa6ee" stroke-width="0.9" />
<line x1="863.40" y1="285.10" x2="865.20" y2="285.10" stroke="#3aa6ee" stroke-width="0.9" />
<text x="885.40" y="277.40" font-size="7.5" fill="#bcc0e4" font-family='"Liberation Sans","Noto Sans CJK SC",sans-serif' font-weight="normal" text-anchor="start" >液冷运行</text>
<text x="881.20" y="293.60" font-size="10.8" fill="#10ee10" font-family='"Liberation Sans","Noto Sans CJK SC",sans-serif' font-weight="bold" text-anchor="start" >停止</text>
<rect x="939.20" y="264.00" width="102.40" height="43.20" fill="none" stroke="#1a2c78" stroke-width="0.8" rx="1.6" />
<rect x="977.80" y="281.60" width="49.80" height="18.50" fill="#0e1450" stroke="#19297a" stroke-width="0.7" fill-opacity="0.45"/>
<circle cx="961.0" cy="286.7" r="14.7" fill="none" stroke="#124a9a" stroke-width="1"/>
<circle cx="961.0" cy="286.7" r="12.5" fill="#111858" stroke="#2b90e6" stroke-width="1"/>
<path d="M973.60,279.10 l3.2,-2.8 q0.9,-0.8 2,-0.8 h5.6" fill="none" stroke="#3a9cd0" stroke-width="0.8"/>
<circle cx="984.80" cy="275.50" r="0.9" fill="#58c8f0"/>
<rect x="956.40" y="280.50" width="9.20" height="12.40" fill="none" stroke="#3aa6ee" stroke-width="1.1" rx="1" />
<rect x="958.40" y="282.90" width="5.20" height="3.40" fill="none" stroke="#3aa6ee" stroke-width="0.9" />
<line x1="958.40" y1="288.50" x2="963.60" y2="288.50" stroke="#3aa6ee" stroke-width="0.9" />
<line x1="958.40" y1="290.50" x2="963.60" y2="290.50" stroke="#3aa6ee" stroke-width="0.9" />
<text x="986.40" y="277.40" font-size="7.5" fill="#bcc0e4" font-family='"Liberation Sans","Noto Sans CJK SC",sans-serif' font-weight="normal" text-anchor="start" >水浸状态</text>
<text x="986.00" y="294.60" font-size="14.2" fill="#1fc4d2" font-family='"Liberation Serif","Noto Serif CJK SC",serif' font-weight="600" text-anchor="start" >正常</text>
<text x="323.00" y="338.00" font-size="7.4" fill="#d4d8f0" font-family='"Liberation Sans","Noto Sans CJK SC",sans-serif' font-weight="normal" text-anchor="start" >PCS功率曲线</text>
<text x="558.70" y="338.00" font-size="7.4" fill="#d4d8f0" font-family='"Liberation Sans","Noto Sans CJK SC",sans-serif' font-weight="normal" text-anchor="start" >电度曲线</text>
<text x="839.60" y="338.00" font-size="7.4" fill="#d4d8f0" font-family='"Liberation Sans","Noto Sans CJK SC",sans-serif' font-weight="normal" text-anchor="start" >电池SOC曲线</text>
<rect x="329.30" y="349.70" width="190.40" height="112.30" fill="#141b5d" />
<line x1="337.20" y1="349.70" x2="337.20" y2="462.00" stroke="#0c114a" stroke-width="0.9" />
<line x1="345.13" y1="349.70" x2="345.13" y2="462.00" stroke="#0c114a" stroke-width="0.9" />
<line x1="353.06" y1="349.70" x2="353.06" y2="462.00" stroke="#0c114a" stroke-width="0.9" />
<line x1="360.99" y1="349.70" x2="360.99" y2="462.00" stroke="#0c114a" stroke-width="0.9" />
<line x1="368.92" y1="349.70" x2="368.92" y2="462.00" stroke="#0c114a" stroke-width="0.9" />
<line x1="376.85" y1="349.70" x2="376.85" y2="462.00" stroke="#0c114a" stroke-width="0.9" />
<line x1="384.78" y1="349.70" x2="384.78" y2="462.00" stroke="#0c114a" stroke-width="0.9" />
<line x1="392.71" y1="349.70" x2="392.71" y2="462.00" stroke="#0c114a" stroke-width="0.9" />
<line x1="400.64" y1="349.70" x2="400.64" y2="462.00" stroke="#0c114a" stroke-width="0.9" />
<line x1="408.57" y1="349.70" x2="408.57" y2="462.00" stroke="#0c114a" stroke-width="0.9" />
<line x1="416.50" y1="349.70" x2="416.50" y2="462.00" stroke="#0c114a" stroke-width="0.9" />
<line x1="424.43" y1="349.70" x2="424.43" y2="462.00" stroke="#0c114a" stroke-width="0.9" />
<line x1="432.36" y1="349.70" x2="432.36" y2="462.00" stroke="#0c114a" stroke-width="0.9" />
<line x1="440.29" y1="349.70" x2="440.29" y2="462.00" stroke="#0c114a" stroke-width="0.9" />
<line x1="448.22" y1="349.70" x2="448.22" y2="462.00" stroke="#0c114a" stroke-width="0.9" />
<line x1="456.15" y1="349.70" x2="456.15" y2="462.00" stroke="#0c114a" stroke-width="0.9" />
<line x1="464.08" y1="349.70" x2="464.08" y2="462.00" stroke="#0c114a" stroke-width="0.9" />
<line x1="472.01" y1="349.70" x2="472.01" y2="462.00" stroke="#0c114a" stroke-width="0.9" />
<line x1="479.94" y1="349.70" x2="479.94" y2="462.00" stroke="#0c114a" stroke-width="0.9" />
<line x1="487.87" y1="349.70" x2="487.87" y2="462.00" stroke="#0c114a" stroke-width="0.9" />
<line x1="495.80" y1="349.70" x2="495.80" y2="462.00" stroke="#0c114a" stroke-width="0.9" />
<line x1="503.73" y1="349.70" x2="503.73" y2="462.00" stroke="#0c114a" stroke-width="0.9" />
<line x1="511.66" y1="349.70" x2="511.66" y2="462.00" stroke="#0c114a" stroke-width="0.9" />
<line x1="329.30" y1="362.40" x2="519.70" y2="362.40" stroke="#0c114a" stroke-width="0.9" />
<line x1="329.30" y1="375.10" x2="519.70" y2="375.10" stroke="#0c114a" stroke-width="0.9" />
<line x1="329.30" y1="387.80" x2="519.70" y2="387.80" stroke="#0c114a" stroke-width="0.9" />
<line x1="329.30" y1="400.50" x2="519.70" y2="400.50" stroke="#0c114a" stroke-width="0.9" />
<line x1="329.30" y1="413.20" x2="519.70" y2="413.20" stroke="#0c114a" stroke-width="0.9" />
<line x1="329.30" y1="425.90" x2="519.70" y2="425.90" stroke="#0c114a" stroke-width="0.9" />
<line x1="329.30" y1="438.60" x2="519.70" y2="438.60" stroke="#0c114a" stroke-width="0.9" />
<line x1="329.30" y1="451.30" x2="519.70" y2="451.30" stroke="#0c114a" stroke-width="0.9" />
<rect x="329.30" y="349.70" width="190.40" height="112.30" fill="none" stroke="#245c9c" stroke-width="0.9" />
<line x1="329.30" y1="358.30" x2="519.70" y2="358.30" stroke="#787a40" stroke-width="1.0" />
<line x1="329.30" y1="453.00" x2="519.70" y2="453.00" stroke="#787a40" stroke-width="1.0" />
<path d="M329.9,409.6V427.7M331.5,417.7V426.1M332.6,419.5V430.9M334.5,411.8V427.4M336.3,410.7V420.6M337.9,412.2V435.0M339.4,417.8V426.1M341.1,405.7V423.5M342.4,424.0V439.7M344.1,412.1V435.1M345.7,415.1V436.7M347.2,406.8V430.8M349.0,417.7V428.8M350.8,414.8V429.9M352.4,411.7V425.8M353.8,417.4V435.1M355.4,414.8V438.7M357.1,405.2V428.6M358.8,413.3V437.9M360.6,420.3V437.7M362.2,414.1V431.6M363.6,425.7V434.1M365.3,412.2V433.8M366.8,415.9V425.8M368.1,418.4V426.4M369.7,407.3V415.3M371.4,405.2V429.1M372.9,418.5V441.2M374.2,424.4V432.2M375.5,418.4V432.9M377.1,412.2V435.0M378.4,412.0V436.5M380.2,411.0V427.6M381.9,418.5V436.5M383.4,406.9V423.3M384.8,405.7V425.9M386.2,411.5V428.1M387.7,433.8V441.2M389.1,414.4V432.7M390.7,419.9V428.2M392.3,410.4V423.9M394.0,416.0V436.5M395.1,419.4V441.2M396.4,419.7V435.1M398.0,416.1V428.9M399.4,419.9V437.8M400.7,414.4V422.1M402.3,420.2V440.6M403.7,420.1V431.6M404.9,425.6V440.7M406.6,421.1V434.3M408.3,419.1V434.2M410.1,416.7V435.6M411.9,420.2V435.5M413.2,423.0V433.7M414.9,417.0V439.3M416.2,412.8V431.6M417.9,426.2V439.6M419.1,415.6V427.6M420.5,425.3V440.0M421.9,409.5V419.5M423.1,418.2V441.2M424.9,417.5V441.2M426.7,418.4V429.6M428.4,420.2V436.7M429.7,411.7V425.1M431.0,424.8V437.2M432.7,423.8V431.8M434.5,409.5V432.8M436.3,405.7V423.3M437.5,418.9V431.5M439.1,413.9V430.6M440.5,425.1V438.5M441.8,411.4V434.1M443.3,420.9V431.6M444.8,409.7V431.6M446.1,417.2V438.9M447.8,410.3V417.6M449.4,419.8V431.9M450.8,415.0V431.7M452.2,412.1V419.4M453.4,420.9V430.4M454.6,425.1V441.2M455.8,421.3V437.5M457.1,412.2V431.0M458.7,420.6V434.3M460.0,413.1V430.3M461.6,417.8V431.9M462.8,415.4V433.5M464.5,419.4V433.4M466.3,411.0V424.9M467.8,407.8V427.7M469.2,413.6V425.2M470.7,406.0V425.7M471.9,405.2V427.8M473.7,416.3V430.3M475.5,414.0V429.6M476.7,406.1V427.9M478.4,418.0V437.2M480.0,406.3V423.7M481.2,415.5V425.3M483.0,416.7V424.7M484.1,424.3V434.7M485.3,416.0V438.4M486.5,414.3V436.6M488.3,406.4V424.0M490.1,421.8V438.2M491.7,419.2V428.3M493.4,417.1V430.2M495.0,410.4V432.5M496.3,414.8V433.1M498.0,418.7V433.0M499.4,411.4V426.2M500.6,417.3V433.5M502.4,410.5V420.6M504.0,416.7V437.5M505.7,407.6V426.4M507.5,417.2V427.1M508.7,414.3V430.8M510.1,405.2V421.5M511.4,413.4V431.1M512.8,420.2V431.6M514.4,416.6V436.5M515.8,409.9V432.5M517.4,418.2V425.8M518.9,418.8V432.9" fill="none" stroke="#128ca6" stroke-width="1.0" stroke-opacity="0.85"/>
<path d="M329.9,410.0V420.9M332.0,413.6V435.6M333.9,418.8V431.9M335.5,415.4V439.7M337.7,423.4V441.2M339.4,419.8V432.1M341.4,406.6V425.7M342.9,415.4V436.4M345.1,427.0V435.0M346.5,418.3V427.9M348.6,411.4V434.8M350.3,420.9V438.0M352.0,419.9V441.2M353.5,422.1V433.4M355.2,420.0V441.2M357.2,418.1V434.9M359.3,422.0V436.0M361.2,425.7V435.0M363.2,416.6V438.3M365.4,419.0V434.0M367.2,415.6V433.9M368.7,423.9V433.3M370.4,417.1V439.1M372.5,422.6V438.4M374.1,413.7V433.7M375.8,417.8V430.7M377.2,410.6V424.8M379.3,416.4V435.7M380.9,405.2V421.2M382.8,418.0V426.3M384.6,411.6V426.4M386.5,416.8V433.7M388.3,414.5V439.2M390.0,425.0V432.8M391.3,418.3V427.1M392.8,416.3V431.7M395.0,411.4V426.5M396.8,417.5V432.8M398.8,423.6V438.4M400.8,408.3V431.9M402.3,415.6V435.1M404.2,422.9V440.7M406.3,405.2V427.9M408.0,414.5V437.2M410.0,413.8V437.5M412.1,411.0V435.5M414.3,417.4V427.2M416.2,419.1V441.2M417.7,416.8V427.5M419.2,420.3V429.2M421.5,416.7V437.3M423.5,410.4V427.0M425.2,412.7V424.7M426.9,406.9V425.4M428.8,411.6V434.6M430.9,418.3V437.2M432.3,414.9V423.1M433.9,414.0V429.4M436.0,407.9V427.6M437.8,409.3V425.7M439.3,406.0V426.3M441.1,414.5V429.8M442.9,405.2V423.0M445.0,414.4V428.9M447.0,426.1V441.2M448.5,406.3V428.8M450.6,419.2V432.2M452.6,412.9V431.1M454.2,418.5V427.4M456.2,412.9V436.9M457.8,416.5V427.2M459.6,405.2V417.7M461.9,417.9V428.8M464.0,413.5V431.0M465.8,414.0V438.4M467.5,411.2V419.2M469.4,418.1V440.7M471.1,416.3V434.3M472.6,415.6V438.4M474.9,425.1V432.9M477.1,411.3V425.7M478.9,416.0V429.5M480.4,419.2V437.4M482.4,405.2V429.5M483.9,420.4V433.8M485.8,406.8V422.2M487.3,408.2V432.2M488.8,414.7V433.3M490.7,424.9V438.6M492.4,417.5V425.6M493.8,414.4V422.4M495.3,425.2V441.2M497.0,424.1V432.1M498.8,427.2V441.2M500.5,417.4V431.9M502.5,418.9V434.6M504.6,415.0V438.0M506.5,415.0V429.7M508.3,424.2V433.1M510.5,417.2V426.6M511.9,418.3V430.7M513.9,409.6V432.9M515.5,422.5V440.6M517.4,418.3V425.7M518.8,418.1V427.0" fill="none" stroke="#1cbcd2" stroke-width="0.95" stroke-opacity="0.9"/>
<path d="M329.9,415.0V420.9M332.6,418.5V425.9M335.0,418.7V423.6M337.6,419.0V422.8M340.7,413.8V423.3M343.2,423.0V432.0M346.4,417.7V423.7M349.4,418.0V422.9M351.8,416.2V424.5M354.4,421.7V427.4M357.4,423.7V426.8M360.9,417.3V425.9M364.1,418.3V422.2M366.6,420.0V426.1M368.8,420.3V423.2M372.1,415.0V421.2M375.5,414.4V420.4M378.4,422.4V428.7M380.6,423.4V429.1M383.2,423.4V430.0M386.2,418.4V424.8M389.6,422.1V430.4M392.6,423.4V426.9M394.9,419.5V423.2M397.0,415.9V419.5M400.0,412.8V422.2M403.2,424.7V429.2M405.6,426.9V429.8M408.4,423.6V427.4M411.0,421.6V424.6M413.8,422.1V425.2M415.9,417.9V422.1M419.0,426.9V430.4M421.4,419.6V425.4M423.6,423.5V432.1M426.1,423.0V432.0M429.4,420.1V424.2M432.4,421.4V430.0M435.7,423.8V426.8M438.3,425.5V430.4M440.5,432.2V437.1M443.3,425.7V432.3M446.1,415.8V422.0M448.3,416.4V423.7M451.3,418.5V424.5M454.6,414.4V422.3M456.7,416.4V424.2M459.4,420.6V426.2M461.8,411.6V418.8M464.2,420.2V425.8M467.2,427.7V430.7M470.2,422.4V426.2M473.6,417.6V423.9M476.9,415.0V423.8M479.9,413.5V422.7M482.7,414.0V421.1M486.0,416.6V423.4M488.5,418.8V426.6M491.7,423.0V426.0M495.1,418.0V425.9M498.6,424.7V428.6M501.0,410.4V417.4M504.1,427.6V432.0M506.5,426.2V432.0M508.9,422.4V425.5M511.2,419.7V427.2M514.4,419.2V427.3M516.6,414.3V423.1" fill="none" stroke="#28e6ee" stroke-width="0.9" stroke-opacity="0.85"/>
<rect x="850.00" y="350.30" width="191.30" height="111.70" fill="#141b5d" />
<line x1="857.90" y1="350.30" x2="857.90" y2="462.00" stroke="#0c114a" stroke-width="0.9" />
<line x1="865.83" y1="350.30" x2="865.83" y2="462.00" stroke="#0c114a" stroke-width="0.9" />
<line x1="873.76" y1="350.30" x2="873.76" y2="462.00" stroke="#0c114a" stroke-width="0.9" />
<line x1="881.69" y1="350.30" x2="881.69" y2="462.00" stroke="#0c114a" stroke-width="0.9" />
<line x1="889.62" y1="350.30" x2="889.62" y2="462.00" stroke="#0c114a" stroke-width="0.9" />
<line x1="897.55" y1="350.30" x2="897.55" y2="462.00" stroke="#0c114a" stroke-width="0.9" />
<line x1="905.48" y1="350.30" x2="905.48" y2="462.00" stroke="#0c114a" stroke-width="0.9" />
<line x1="913.41" y1="350.30" x2="913.41" y2="462.00" stroke="#0c114a" stroke-width="0.9" />
<line x1="921.34" y1="350.30" x2="921.34" y2="462.00" stroke="#0c114a" stroke-width="0.9" />
<line x1="929.27" y1="350.30" x2="929.27" y2="462.00" stroke="#0c114a" stroke-width="0.9" />
<line x1="937.20" y1="350.30" x2="937.20" y2="462.00" stroke="#0c114a" stroke-width="0.9" />
<line x1="945.13" y1="350.30" x2="945.13" y2="462.00" stroke="#0c114a" stroke-width="0.9" />
<line x1="953.06" y1="350.30" x2="953.06" y2="462.00" stroke="#0c114a" stroke-width="0.9" />
<line x1="960.99" y1="350.30" x2="960.99" y2="462.00" stroke="#0c114a" stroke-width="0.9" />
<line x1="968.92" y1="350.30" x2="968.92" y2="462.00" stroke="#0c114a" stroke-width="0.9" />
<line x1="976.85" y1="350.30" x2="976.85" y2="462.00" stroke="#0c114a" stroke-width="0.9" />
<line x1="984.78" y1="350.30" x2="984.78" y2="462.00" stroke="#0c114a" stroke-width="0.9" />
<line x1="992.71" y1="350.30" x2="992.71" y2="462.00" stroke="#0c114a" stroke-width="0.9" />
<line x1="1000.64" y1="350.30" x2="1000.64" y2="462.00" stroke="#0c114a" stroke-width="0.9" />
<line x1="1008.57" y1="350.30" x2="1008.57" y2="462.00" stroke="#0c114a" stroke-width="0.9" />
<line x1="1016.50" y1="350.30" x2="1016.50" y2="462.00" stroke="#0c114a" stroke-width="0.9" />
<line x1="1024.43" y1="350.30" x2="1024.43" y2="462.00" stroke="#0c114a" stroke-width="0.9" />
<line x1="1032.36" y1="350.30" x2="1032.36" y2="462.00" stroke="#0c114a" stroke-width="0.9" />
<line x1="1040.29" y1="350.30" x2="1040.29" y2="462.00" stroke="#0c114a" stroke-width="0.9" />
<line x1="850.00" y1="363.00" x2="1041.30" y2="363.00" stroke="#0c114a" stroke-width="0.9" />
<line x1="850.00" y1="375.70" x2="1041.30" y2="375.70" stroke="#0c114a" stroke-width="0.9" />
<line x1="850.00" y1="388.40" x2="1041.30" y2="388.40" stroke="#0c114a" stroke-width="0.9" />
<line x1="850.00" y1="401.10" x2="1041.30" y2="401.10" stroke="#0c114a" stroke-width="0.9" />
<line x1="850.00" y1="413.80" x2="1041.30" y2="413.80" stroke="#0c114a" stroke-width="0.9" />
<line x1="850.00" y1="426.50" x2="1041.30" y2="426.50" stroke="#0c114a" stroke-width="0.9" />
<line x1="850.00" y1="439.20" x2="1041.30" y2="439.20" stroke="#0c114a" stroke-width="0.9" />
<line x1="850.00" y1="451.90" x2="1041.30" y2="451.90" stroke="#0c114a" stroke-width="0.9" />
<rect x="850.00" y="350.30" width="191.30" height="111.70" fill="none" stroke="#245c9c" stroke-width="0.9" />
<line x1="850.00" y1="358.90" x2="1041.30" y2="358.90" stroke="#787a40" stroke-width="1.0" />
<line x1="850.00" y1="453.00" x2="1041.30" y2="453.00" stroke="#787a40" stroke-width="1.0" />
<path d="M850.6,405.2V419.0M852.1,408.7V426.4M853.4,405.2V425.3M854.6,414.8V427.5M855.8,420.5V428.5M857.6,405.2V426.7M859.2,415.7V423.2M860.8,415.6V423.9M862.0,414.1V429.6M863.5,411.9V434.3M865.0,408.6V427.8M866.5,411.4V423.6M868.3,421.9V441.2M869.7,416.3V427.7M871.0,422.9V437.3M872.8,419.0V433.2M874.6,417.1V428.1M876.4,414.5V430.2M878.3,411.7V430.2M880.0,417.6V429.7M881.2,405.6V426.4M882.4,427.9V439.5M883.6,425.5V435.9M885.2,417.9V433.2M886.4,412.5V431.2M887.6,412.0V426.8M888.9,409.5V431.1M890.3,423.6V441.2M891.6,405.2V423.3M892.8,415.2V440.2M894.1,414.5V427.7M895.4,425.8V434.4M896.6,409.1V427.1M898.0,411.7V427.1M899.8,405.2V426.1M901.1,416.9V426.8M902.9,417.4V428.1M904.6,405.7V429.8M905.9,422.2V440.2M907.3,413.6V422.7M908.5,415.1V435.0M909.8,409.7V431.7M911.3,410.8V431.0M912.5,419.3V430.6M914.1,420.2V432.5M915.9,411.5V422.3M917.0,417.9V426.2M918.3,421.4V435.3M919.8,414.8V438.1M921.7,417.6V436.6M923.3,417.6V425.4M924.5,410.9V434.5M926.1,416.1V434.8M927.6,414.3V434.6M929.0,418.4V435.4M930.7,413.4V436.8M932.3,410.9V434.6M933.7,407.1V426.7M935.5,418.5V439.9M937.3,413.1V430.7M938.9,411.7V429.9M940.1,420.9V439.6M941.9,424.5V438.7M943.6,411.2V428.8M945.1,416.3V437.0M946.2,414.6V432.6M947.7,418.2V434.3M949.3,421.0V441.2M950.6,419.5V438.9M951.9,420.0V430.2M953.7,410.1V433.3M955.1,410.2V429.4M956.3,405.2V427.8M958.1,420.9V435.0M959.7,414.8V430.9M961.4,415.1V437.6M963.1,422.4V432.7M964.6,416.3V428.5M965.8,409.5V425.6M967.2,416.0V438.3M969.1,417.8V425.5M970.8,420.2V428.1M972.5,409.0V430.4M973.6,416.9V426.6M975.1,427.3V438.8M976.3,421.2V429.2M977.9,407.6V426.6M979.7,414.0V438.4M981.3,420.5V430.9M982.4,421.6V437.3M984.1,419.0V432.5M985.7,419.4V435.9M987.3,413.5V435.0M989.1,414.6V423.3M991.0,415.8V431.1M992.6,409.4V433.0M994.0,405.2V425.1M995.8,411.4V427.0M997.4,414.6V436.6M999.0,420.8V440.9M1000.3,422.0V441.2M1001.8,405.2V425.1M1003.2,424.1V437.6M1004.4,409.4V424.5M1005.9,418.8V426.5M1007.6,411.8V420.1M1009.4,412.9V434.2M1010.6,420.3V430.2M1012.1,409.6V429.2M1013.9,405.2V419.3M1015.8,415.3V432.0M1017.1,412.2V432.5M1018.7,405.2V419.4M1020.1,411.9V426.0M1021.9,411.9V434.4M1023.7,410.0V426.7M1025.3,414.2V430.4M1026.8,422.6V430.3M1028.7,405.2V426.5M1030.2,412.4V428.4M1031.9,419.5V434.2M1033.7,412.0V435.8M1035.0,411.5V426.5M1036.8,410.6V434.0M1038.3,411.6V430.0M1040.1,420.7V430.2" fill="none" stroke="#128ca6" stroke-width="1.0" stroke-opacity="0.85"/>
<path d="M850.6,418.3V429.0M852.4,414.1V430.2M854.2,416.3V428.0M856.1,420.3V433.4M858.1,415.9V440.1M859.7,409.9V421.3M861.7,412.4V431.8M863.8,412.1V434.4M865.4,412.0V436.7M866.9,414.7V435.0M868.7,407.8V429.8M870.6,413.9V426.5M872.1,407.2V417.0M874.0,415.4V434.0M875.5,417.4V432.5M877.3,422.1V438.0M878.7,412.2V429.0M880.4,405.2V426.8M882.4,415.2V425.1M883.9,417.3V425.9M885.9,407.1V430.7M887.8,410.5V432.0M889.9,407.2V432.1M891.3,406.8V426.4M893.5,407.9V418.4M895.2,417.6V429.7M896.9,415.0V428.3M899.0,413.6V426.2M900.5,425.2V432.7M902.4,417.6V427.4M903.9,414.8V429.6M905.7,406.8V424.0M907.4,419.1V440.2M909.2,420.5V435.0M911.1,405.9V428.9M913.2,418.3V428.3M914.7,414.8V435.2M916.3,405.6V413.9M918.4,419.4V439.8M920.7,409.7V426.4M922.9,410.1V432.4M924.8,412.5V434.0M926.3,414.8V423.2M927.9,418.3V436.4M930.1,412.6V427.2M931.9,405.6V426.1M934.2,421.4V441.2M935.6,415.7V427.6M937.2,416.7V426.4M939.1,416.5V431.6M940.6,420.6V432.5M942.7,405.2V424.1M944.5,417.1V440.0M946.7,414.2V438.5M948.2,417.8V431.5M950.0,413.1V431.8M951.8,419.1V441.2M953.8,411.0V426.4M955.1,411.4V422.0M957.4,411.0V418.6M959.1,415.7V433.3M960.7,410.9V422.6M962.2,419.6V429.1M964.2,416.7V432.0M965.5,406.8V423.2M967.1,425.7V435.4M968.9,421.4V429.7M970.8,418.7V440.2M972.6,409.6V434.7M974.2,410.7V434.4M975.6,411.1V428.5M977.1,411.4V421.6M979.4,421.3V435.9M981.5,413.2V436.0M982.9,416.6V425.3M984.8,415.4V431.3M986.4,418.6V430.5M988.0,414.3V425.1M990.1,408.6V428.2M991.9,422.5V441.2M993.6,426.9V435.2M995.8,413.1V437.8M997.5,428.6V440.5M999.7,422.8V438.6M1001.9,419.4V432.6M1003.6,416.6V427.4M1005.8,419.8V430.3M1007.3,416.9V438.7M1008.8,411.2V433.0M1010.9,411.0V435.1M1012.3,413.9V427.2M1014.2,410.9V423.9M1016.1,423.6V436.8M1017.7,405.2V429.2M1019.3,412.5V426.2M1021.1,420.7V430.0M1022.9,411.7V427.7M1024.4,409.3V421.6M1025.9,419.5V433.6M1028.1,416.7V437.5M1030.3,411.3V428.8M1032.3,410.6V435.7M1033.9,416.6V430.9M1035.7,405.2V414.2M1037.6,419.9V440.7M1039.7,413.4V435.8" fill="none" stroke="#1cbcd2" stroke-width="0.95" stroke-opacity="0.9"/>
<path d="M850.6,419.1V428.9M853.0,416.8V424.3M855.2,418.8V426.6M858.3,416.2V424.3M861.0,428.3V431.9M863.9,409.2V418.3M867.0,414.2V423.7M869.2,419.1V427.2M872.5,421.4V426.3M875.3,422.2V427.6M878.7,420.6V429.7M880.9,419.0V422.5M883.9,419.9V429.6M887.2,413.7V418.4M890.4,421.8V428.1M892.7,421.1V424.9M895.5,417.2V421.0M898.3,410.4V420.2M901.4,418.4V425.7M903.9,420.9V428.2M906.9,417.1V422.7M909.7,425.4V434.1M912.1,424.4V430.2M915.4,427.6V432.1M918.1,426.5V431.4M920.8,422.1V430.3M922.9,426.4V434.9M925.8,420.3V427.1M928.5,419.2V424.1M931.0,422.7V427.9M934.4,423.6V426.5M936.8,414.6V421.2M939.9,413.7V422.9M942.4,423.1V428.6M945.5,417.8V423.4M947.7,425.9V431.9M949.9,421.7V428.2M953.2,413.9V418.1M955.9,419.7V428.3M958.1,419.9V429.2M961.0,418.5V427.6M964.2,420.4V423.9M966.6,424.4V427.8M969.8,423.4V429.6M972.9,419.5V425.4M975.9,425.1V430.8M979.4,423.5V428.7M981.7,413.6V417.4M984.0,420.1V428.9M986.4,417.0V424.1M988.9,415.2V422.3M992.3,424.9V429.3M994.8,418.7V428.4M997.7,419.2V425.3M1000.2,419.9V423.7M1002.4,413.7V417.7M1005.7,419.6V424.0M1008.2,415.9V423.4M1011.3,420.9V425.4M1014.8,423.5V430.2M1018.2,420.6V427.4M1021.6,426.9V432.2M1024.0,425.0V431.3M1026.6,413.7V417.1M1029.3,424.5V430.5M1032.2,420.3V424.7M1034.4,409.5V418.4M1036.9,418.6V426.9M1040.2,418.6V422.7" fill="none" stroke="#28e6ee" stroke-width="0.9" stroke-opacity="0.85"/>
<rect x="579.00" y="345.00" width="218.00" height="117.00" fill="#141c5c" stroke="#090d34" stroke-width="1.4" />
<line x1="589.00" y1="345.60" x2="589.00" y2="462.00" stroke="#7494c4" stroke-width="0.9" stroke-opacity="0.55"/>
<line x1="598.04" y1="345.60" x2="598.04" y2="462.00" stroke="#7494c4" stroke-width="0.9" stroke-opacity="0.55"/>
<line x1="607.08" y1="345.60" x2="607.08" y2="462.00" stroke="#7494c4" stroke-width="0.9" stroke-opacity="0.55"/>
<line x1="616.12" y1="345.60" x2="616.12" y2="462.00" stroke="#7494c4" stroke-width="0.9" stroke-opacity="0.55"/>
<line x1="625.16" y1="345.60" x2="625.16" y2="462.00" stroke="#7494c4" stroke-width="0.9" stroke-opacity="0.55"/>
<line x1="634.20" y1="345.60" x2="634.20" y2="462.00" stroke="#7494c4" stroke-width="0.9" stroke-opacity="0.55"/>
<line x1="643.24" y1="345.60" x2="643.24" y2="462.00" stroke="#7494c4" stroke-width="0.9" stroke-opacity="0.55"/>
<line x1="652.28" y1="345.60" x2="652.28" y2="462.00" stroke="#7494c4" stroke-width="0.9" stroke-opacity="0.55"/>
<line x1="661.32" y1="345.60" x2="661.32" y2="462.00" stroke="#7494c4" stroke-width="0.9" stroke-opacity="0.55"/>
<line x1="670.36" y1="345.60" x2="670.36" y2="462.00" stroke="#7494c4" stroke-width="0.9" stroke-opacity="0.55"/>
<line x1="679.40" y1="345.60" x2="679.40" y2="462.00" stroke="#7494c4" stroke-width="0.9" stroke-opacity="0.55"/>
<line x1="688.44" y1="345.60" x2="688.44" y2="462.00" stroke="#7494c4" stroke-width="0.9" stroke-opacity="0.55"/>
<line x1="697.48" y1="345.60" x2="697.48" y2="462.00" stroke="#7494c4" stroke-width="0.9" stroke-opacity="0.55"/>
<line x1="706.52" y1="345.60" x2="706.52" y2="462.00" stroke="#7494c4" stroke-width="0.9" stroke-opacity="0.55"/>
<line x1="715.56" y1="345.60" x2="715.56" y2="462.00" stroke="#7494c4" stroke-width="0.9" stroke-opacity="0.55"/>
<line x1="724.60" y1="345.60" x2="724.60" y2="462.00" stroke="#7494c4" stroke-width="0.9" stroke-opacity="0.55"/>
<line x1="733.64" y1="345.60" x2="733.64" y2="462.00" stroke="#7494c4" stroke-width="0.9" stroke-opacity="0.55"/>
<line x1="742.68" y1="345.60" x2="742.68" y2="462.00" stroke="#7494c4" stroke-width="0.9" stroke-opacity="0.55"/>
<line x1="751.72" y1="345.60" x2="751.72" y2="462.00" stroke="#7494c4" stroke-width="0.9" stroke-opacity="0.55"/>
<line x1="760.76" y1="345.60" x2="760.76" y2="462.00" stroke="#7494c4" stroke-width="0.9" stroke-opacity="0.55"/>
<line x1="769.80" y1="345.60" x2="769.80" y2="462.00" stroke="#7494c4" stroke-width="0.9" stroke-opacity="0.55"/>
<line x1="778.84" y1="345.60" x2="778.84" y2="462.00" stroke="#7494c4" stroke-width="0.9" stroke-opacity="0.55"/>
<line x1="787.88" y1="345.60" x2="787.88" y2="462.00" stroke="#7494c4" stroke-width="0.9" stroke-opacity="0.55"/>
<line x1="579.60" y1="356.90" x2="796.40" y2="356.90" stroke="#7494c4" stroke-width="0.9" stroke-opacity="0.5"/>
<line x1="579.60" y1="368.10" x2="796.40" y2="368.10" stroke="#7494c4" stroke-width="0.9" stroke-opacity="0.5"/>
<line x1="579.60" y1="379.30" x2="796.40" y2="379.30" stroke="#7494c4" stroke-width="0.9" stroke-opacity="0.5"/>
<line x1="579.60" y1="390.50" x2="796.40" y2="390.50" stroke="#7494c4" stroke-width="0.9" stroke-opacity="0.5"/>
<line x1="579.60" y1="401.70" x2="796.40" y2="401.70" stroke="#7494c4" stroke-width="0.9" stroke-opacity="0.5"/>
<line x1="579.60" y1="412.90" x2="796.40" y2="412.90" stroke="#7494c4" stroke-width="0.9" stroke-opacity="0.5"/>
<line x1="579.60" y1="424.10" x2="796.40" y2="424.10" stroke="#7494c4" stroke-width="0.9" stroke-opacity="0.5"/>
<line x1="579.60" y1="435.30" x2="796.40" y2="435.30" stroke="#7494c4" stroke-width="0.9" stroke-opacity="0.5"/>
<line x1="579.60" y1="446.50" x2="796.40" y2="446.50" stroke="#7494c4" stroke-width="0.9" stroke-opacity="0.5"/>
<line x1="579.60" y1="457.70" x2="796.40" y2="457.70" stroke="#7494c4" stroke-width="0.9" stroke-opacity="0.5"/>
<line x1="579.60" y1="353.50" x2="796.40" y2="353.50" stroke="#a89c34" stroke-width="1.1" />
<line x1="579.60" y1="449.60" x2="796.40" y2="449.60" stroke="#a89c34" stroke-width="1.1" />
<path d="M580.0,406.6V431.2M581.8,402.0V422.2M583.0,402.0V416.8M584.9,416.9V426.3M586.5,410.1V427.9M587.7,419.5V430.8M589.1,421.0V431.3M591.0,409.1V419.0M592.7,406.9V430.2M594.0,412.8V424.1M596.0,408.6V433.5M597.7,405.2V424.9M599.0,412.9V437.9M600.9,408.9V421.7M602.4,415.4V423.9M603.9,411.6V430.0M605.1,409.9V422.9M606.9,406.4V422.5M608.4,406.7V415.1M610.4,416.2V424.0M612.2,409.1V430.9M613.7,410.0V427.9M614.9,410.7V435.5M616.2,410.6V431.8M618.2,418.1V431.9M619.8,408.5V430.0M621.1,409.6V432.6M622.3,402.0V424.6M623.6,405.8V429.9M625.0,415.7V438.6M626.7,415.1V425.7M627.9,421.4V431.5M629.7,421.4V429.6M631.7,414.0V431.1M633.2,412.0V434.5M634.8,422.1V437.1M636.0,415.7V432.1M637.9,417.2V426.9M639.7,418.6V438.6M641.0,412.7V428.0M642.3,417.1V432.7M644.3,407.3V430.2M646.3,406.1V426.7M647.8,417.3V429.9M649.4,412.1V437.5M651.3,416.1V434.9M652.9,414.0V426.3M654.8,411.5V434.7M656.2,413.0V433.1M658.0,402.0V422.9M659.5,411.6V427.8M661.3,406.8V426.8M662.7,418.8V436.7M663.9,409.6V426.9M665.3,406.9V429.2M667.0,404.8V426.7M668.5,404.4V426.9M670.0,402.9V425.7M671.9,403.3V428.1M673.5,402.0V416.6M674.8,419.3V435.4M676.6,402.0V421.1M678.4,416.5V434.5M680.1,421.7V436.7M681.8,412.2V432.7M683.0,409.0V419.2M684.6,409.3V429.1M686.3,414.3V422.4M687.9,416.5V426.3M689.3,417.4V428.0M690.7,419.4V433.6M692.4,412.9V431.0M693.8,413.3V428.1M695.2,412.8V427.6M696.5,418.6V426.5M698.2,411.0V420.0M699.8,403.5V428.4M701.7,417.5V432.4M703.5,410.9V420.8M705.2,406.0V423.6M707.2,418.3V432.0M709.1,412.9V420.3M710.4,406.4V416.3M712.1,403.0V426.6M713.6,407.9V420.5M715.5,411.8V426.1M717.5,417.3V429.3M719.5,405.6V422.0M721.0,403.1V419.4M722.4,422.9V438.6M723.7,407.3V420.0M725.6,402.8V425.2M726.8,402.0V426.2M728.6,411.5V423.3M730.0,420.8V433.5M731.7,423.4V438.6M733.4,407.6V417.0M735.2,407.8V420.6M736.9,408.8V425.9M738.4,416.5V430.5M740.2,412.9V424.9M741.8,407.5V431.6M743.7,408.9V430.4M745.2,411.5V429.3M747.0,404.8V428.8M748.5,409.3V423.8M750.4,411.1V433.6M751.7,413.7V436.3M753.4,406.3V427.9M755.3,417.7V427.6M756.9,408.5V421.8M758.2,410.0V428.0M760.1,413.0V435.3M761.9,412.5V432.0M763.1,405.4V431.0M764.9,402.5V410.7M766.8,409.6V434.3M768.6,422.9V432.6M770.0,413.8V432.3M771.5,413.9V424.2M773.2,415.8V430.1M774.5,417.1V425.5M776.1,415.3V425.1M777.7,403.8V416.9M779.4,402.0V416.0M780.6,411.9V431.9M781.9,405.1V429.1M783.6,407.6V426.3M785.0,407.4V428.4M786.6,415.7V425.5M788.0,410.9V421.5M789.7,418.6V438.0M791.0,416.5V426.1M792.7,414.8V426.5M794.6,407.3V429.2M795.8,413.1V433.7" fill="none" stroke="#14983a" stroke-width="1.0" stroke-opacity="0.9"/>
<path d="M580.0,407.7V431.7M584.8,412.6V432.5M589.5,404.6V422.4M594.7,415.7V435.1M600.1,412.0V422.1M605.2,415.5V425.8M610.2,406.9V428.6M613.7,405.8V429.0M619.1,409.5V430.2M622.8,416.1V435.7M626.6,411.9V437.1M630.2,407.3V420.4M635.0,404.1V427.7M640.4,410.9V423.7M644.2,407.8V427.2M648.8,409.2V423.7M652.3,415.0V435.7M656.7,415.9V436.9M661.4,421.3V434.5M665.2,413.0V421.6M668.7,418.5V438.6M672.4,404.3V423.7M676.2,416.8V437.9M681.0,408.9V423.9M686.4,417.0V432.4M691.6,410.2V430.0M696.0,402.3V414.6M699.9,415.7V435.5M704.0,413.2V437.4M708.3,407.3V430.8M713.5,416.1V426.4M717.0,412.5V423.2M722.0,415.3V433.0M725.8,414.9V428.2M729.8,405.3V430.9M734.6,405.9V426.3M739.3,402.0V416.0M744.7,413.7V421.6M749.5,416.1V432.8M754.4,410.1V420.7M759.5,410.8V427.5M764.3,410.6V424.4M769.4,423.4V436.3M773.2,403.6V426.6M778.0,419.2V431.6M782.8,404.9V417.8M788.1,410.6V427.1M792.9,410.8V422.3" fill="none" stroke="#c8922a" stroke-width="0.8" stroke-opacity="0.8"/>
<path d="M580.0,406.0V429.2M581.2,413.3V429.8M583.1,416.1V434.7M584.4,415.8V430.0M586.1,406.8V417.0M587.5,417.6V426.9M589.1,415.1V436.6M590.6,406.1V427.1M591.9,407.5V428.1M593.4,422.6V431.6M594.9,409.6V431.7M596.2,411.8V435.3M598.1,415.9V432.2M599.3,413.4V428.5M601.3,419.6V429.1M602.9,411.5V435.2M604.3,412.3V429.5M605.5,414.3V423.2M607.1,415.8V430.4M608.8,411.2V420.2M610.5,409.0V433.9M611.7,415.5V433.0M613.4,407.6V433.1M615.4,416.4V425.9M617.2,412.2V430.7M618.4,409.8V423.8M620.1,406.1V415.0M621.6,402.0V424.9M623.3,402.0V426.0M624.9,416.2V423.8M626.8,410.5V421.7M628.3,417.1V430.4M629.6,406.7V428.3M630.8,406.8V428.4M632.7,405.7V417.6M634.5,412.7V427.8M635.8,418.3V432.5M637.7,412.5V426.6M639.5,419.7V431.8M640.7,417.4V438.6M642.0,426.5V438.6M643.3,412.6V421.0M644.6,404.0V429.0M646.1,421.7V431.6M647.8,415.0V432.4M649.5,419.8V428.3M651.1,412.8V427.2M653.0,409.0V419.4M654.8,415.8V432.2M656.0,408.0V416.2M657.7,421.4V430.2M659.5,423.1V434.4M660.7,416.0V433.6M662.2,421.9V432.4M663.8,415.7V438.6M665.0,407.0V432.5M666.9,407.1V424.3M668.9,415.5V424.1M670.6,406.9V427.5M672.3,415.5V424.7M674.1,405.9V424.9M675.3,413.6V431.9M676.8,412.5V434.9M678.6,409.0V427.8M680.5,418.4V436.9M682.3,415.1V429.9M683.5,418.3V428.9M684.8,420.6V434.4M686.4,409.2V430.7M687.8,410.1V431.7M689.0,415.2V438.6M691.0,408.1V430.7M692.3,408.4V430.0M693.7,418.8V430.2M694.9,417.7V438.6M696.4,419.4V438.6M698.0,407.3V426.2M699.4,415.0V427.0M701.0,411.1V435.7M702.2,422.2V431.4M704.1,413.7V436.6M705.8,417.1V428.5M707.0,409.7V431.6M709.0,414.5V436.3M710.9,418.3V438.6M712.9,411.6V420.7M714.3,412.3V428.6M715.8,415.7V438.4M717.3,413.0V428.7M719.0,414.6V432.3M720.6,414.6V427.9M721.9,415.1V432.4M723.3,412.0V421.8M725.0,404.4V417.9M726.5,402.0V423.1M728.3,407.0V418.2M729.9,408.5V426.0M731.5,406.9V430.1M733.0,416.0V425.2M734.8,405.9V418.4M736.4,406.0V430.2M737.6,412.7V422.8M738.9,412.6V438.1M740.7,415.7V430.3M742.6,405.0V425.0M744.1,411.7V423.9M745.5,406.4V424.9M747.4,411.6V429.4M748.6,410.1V426.1M750.5,408.0V427.7M752.4,414.2V424.2M754.0,405.4V425.1M755.4,408.5V422.2M757.1,418.5V435.8M759.0,412.5V434.0M760.7,416.2V425.3M762.1,410.0V433.8M763.4,421.1V432.2M765.2,402.0V424.5M767.1,415.0V435.4M768.7,422.0V436.6M770.3,414.7V433.6M772.3,402.0V422.3M773.5,409.7V423.5M775.4,416.6V427.4M777.1,402.0V419.2M778.7,408.5V419.0M779.9,402.0V419.6M781.6,417.0V429.5M782.9,423.1V435.9M784.1,405.0V420.7M786.1,421.2V429.2M787.4,418.9V429.9M789.2,417.1V434.0M790.8,413.3V437.5M792.2,405.8V420.1M794.1,409.1V425.3M795.5,411.8V434.6" fill="none" stroke="#38e428" stroke-width="1.0" stroke-opacity="0.9"/>
<path d="M580.0,414.5V424.7M582.1,408.9V422.6M584.8,412.3V419.7M586.6,416.2V425.1M589.1,424.2V431.6M591.2,421.2V426.5M594.2,413.7V425.4M596.1,406.7V415.2M598.4,423.7V432.6M600.4,420.2V434.2M602.4,418.8V429.8M604.6,412.6V422.8M606.6,424.9V432.4M609.4,418.5V425.6M612.3,419.3V432.7M614.8,409.0V422.0M616.8,408.4V415.4M619.7,414.1V428.8M622.0,412.4V421.5M625.0,419.2V428.3M626.8,417.9V433.9M629.2,418.6V428.9M631.6,413.7V425.3M634.1,410.2V422.0M636.1,413.4V428.6M638.3,416.7V428.1M640.5,412.9V426.8M643.2,414.8V423.8M645.9,406.0V421.5M648.2,404.3V417.3M651.1,404.9V415.2M653.4,409.2V416.8M656.2,412.1V425.9M658.9,414.7V425.0M661.7,418.0V426.1M664.0,416.9V423.6M665.9,406.5V422.3M668.6,423.0V433.1M670.7,419.1V432.0M672.6,415.6V422.7M675.4,417.8V429.3M677.7,406.7V418.1M680.5,415.6V423.5M683.2,424.5V429.4M685.8,417.1V428.5M688.4,414.4V428.7M690.9,413.8V429.4M693.8,423.1V429.4M695.7,417.5V427.3M697.7,414.8V429.3M700.3,421.0V429.4M702.7,421.5V428.8M704.7,416.4V429.2M707.1,422.3V427.6M709.8,419.5V433.2M711.6,410.4V420.4M713.5,414.8V427.6M715.6,412.0V424.6M717.7,421.3V429.6M720.6,418.5V426.6M723.0,408.2V414.1M725.5,413.1V423.6M728.2,419.3V431.9M730.7,415.6V426.7M732.5,422.4V431.2M734.7,404.3V418.6M736.6,416.5V430.4M739.4,417.6V427.4M741.9,423.0V432.8M744.3,417.4V426.6M746.6,416.3V425.9M748.7,415.6V428.3M751.5,415.5V423.0M753.7,409.7V419.9M756.3,416.0V426.2M758.7,412.0V424.9M761.6,413.0V426.3M764.2,404.8V419.3M766.8,409.1V424.2M769.1,409.1V420.8M771.9,428.7V433.6M774.0,410.9V419.2M776.3,418.8V424.5M778.5,415.2V430.6M781.2,408.8V424.3M783.8,415.9V423.0M786.0,411.1V418.8M788.9,410.0V418.4M791.1,414.9V427.4M793.1,412.0V423.5M795.2,407.2V417.3" fill="none" stroke="#b8e820" stroke-width="0.9" stroke-opacity="0.85"/>
<path d="M580.0,412.9V417.7M582.8,410.0V419.6M585.9,418.0V425.4M588.5,419.3V429.4M591.2,407.3V414.9M593.5,419.6V424.6M596.1,419.5V427.9M598.6,415.9V425.1M601.8,411.8V415.3M603.8,411.7V421.9M606.1,416.2V424.7M608.2,423.8V428.9M610.5,415.5V422.2M612.8,416.6V422.3M615.0,415.3V424.7M617.9,416.7V423.7M620.1,418.5V423.5M622.1,419.3V424.1M624.3,419.3V425.5M626.9,423.1V428.5M629.5,420.3V423.5M632.1,415.7V421.2M635.0,426.1V428.8M637.7,423.6V429.7M640.1,424.4V428.3M642.7,414.7V422.0M644.7,422.0V430.3M647.2,421.5V427.4M649.8,416.2V426.3M652.4,427.6V430.3M654.9,420.7V424.1M657.0,414.0V422.2M659.8,415.6V424.1M663.0,421.2V430.3M665.5,419.1V428.4M668.4,409.4V416.5M671.1,419.6V427.8M673.3,414.9V418.3M675.6,414.6V418.7M677.8,413.5V423.5M679.9,423.0V430.1M683.1,414.3V422.2M685.1,419.7V429.4M688.1,417.9V421.5M690.1,423.0V431.8M692.3,420.1V423.6M694.7,418.1V427.4M697.9,410.7V419.2M701.0,416.1V425.5M703.7,417.5V422.7M705.9,414.9V421.4M708.4,420.3V424.4M710.4,418.1V421.4M712.9,418.9V422.5M715.9,410.9V418.5M718.2,415.9V418.7M720.2,414.2V418.8M722.6,416.6V425.7M724.5,412.4V417.2M727.4,417.3V421.6M729.4,421.2V426.5M731.5,422.0V432.1M734.3,417.5V426.4M736.3,415.9V420.4M739.3,410.2V415.8M742.4,417.5V420.7M745.2,416.2V425.7M747.7,418.0V427.0M750.0,415.7V423.2M752.2,408.8V416.6M755.4,419.0V424.8M757.5,412.6V421.2M759.7,418.9V422.8M762.1,418.4V424.7M764.3,413.5V416.8M766.4,420.0V426.7M769.5,422.9V426.2M772.6,412.9V423.2M775.7,413.3V420.5M778.7,414.6V424.9M781.3,414.0V420.8M784.0,418.1V423.0M786.5,420.9V425.5M788.9,415.1V424.4M791.2,420.5V429.9M794.2,412.1V416.2" fill="none" stroke="#7cff2c" stroke-width="0.9" stroke-opacity="0.85"/>
</g>
<rect x="1049.50" y="107.60" width="4.50" height="351.40" fill="#f0f0f0" />
<rect x="1049.80" y="116.00" width="4.20" height="324.00" fill="#cdcdcd" />
<path d="M1050.6,111.6 l1.4,-1.6 l1.4,1.6" fill="none" stroke="#555" stroke-width="0.7"/>
<path d="M1050.6,455 l1.4,1.6 l1.4,-1.6" fill="none" stroke="#555" stroke-width="0.7"/>
<rect x="304.00" y="459.00" width="750.00" height="6.60" fill="#f0f0f0" />
<rect x="311.00" y="459.20" width="730.00" height="6.20" fill="#cdcdcd" />
<path d="M308.4,460.8 l-1.6,1.5 l1.6,1.5" fill="none" stroke="#444" stroke-width="0.8"/>
<path d="M1045.4,460.8 l1.6,1.5 l-1.6,1.5" fill="none" stroke="#444" stroke-width="0.8"/>
<rect x="304.00" y="465.60" width="750.00" height="12.80" fill="#f0f0f0" />
<polygon points="307.80,471.80 311.40,469.00 311.40,474.60" fill="#506070" />
<rect x="310.80" y="472.20" width="1.80" height="2.60" fill="#109090" />
<polygon points="315.80,473.80 318.80,469.40 321.80,473.80" fill="#507080" />
<rect x="317.60" y="472.40" width="2.40" height="2.00" fill="#108888" />
<rect x="328.60" y="469.40" width="4.80" height="4.80" fill="none" stroke="#b4b4b4" stroke-width="0.8" />
<line x1="329.60" y1="471.80" x2="332.40" y2="471.80" stroke="#b0b0b0" stroke-width="0.8" />
<rect x="337.60" y="469.40" width="4.80" height="4.80" fill="none" stroke="#b4b4b4" stroke-width="0.8" />
<line x1="338.60" y1="471.80" x2="341.40" y2="471.80" stroke="#b0b0b0" stroke-width="0.8" />
<line x1="349.80" y1="469.20" x2="349.80" y2="474.60" stroke="#606060" stroke-width="0.8" />
<rect x="350.60" y="469.80" width="3.80" height="1.40" fill="#707070" />
<rect x="350.60" y="472.40" width="2.60" height="1.40" fill="#707070" />
<line x1="358.80" y1="469.20" x2="358.80" y2="474.60" stroke="#606060" stroke-width="0.8" />
<rect x="359.60" y="469.80" width="3.80" height="1.40" fill="#707070" />
<rect x="359.60" y="472.40" width="2.60" height="1.40" fill="#707070" />
<line x1="368.20" y1="469.20" x2="368.20" y2="474.60" stroke="#606060" stroke-width="0.8" />
<rect x="369.00" y="469.80" width="3.80" height="1.40" fill="#707070" />
<rect x="369.00" y="472.40" width="2.60" height="1.40" fill="#707070" />
<line x1="377.20" y1="469.20" x2="377.20" y2="474.60" stroke="#606060" stroke-width="0.8" />
<rect x="378.00" y="469.80" width="3.80" height="1.40" fill="#707070" />
<rect x="378.00" y="472.40" width="2.60" height="1.40" fill="#707070" />
<rect x="385.60" y="469.40" width="4.80" height="4.80" fill="none" stroke="#b4b4b4" stroke-width="0.8" />
<line x1="386.60" y1="471.80" x2="389.40" y2="471.80" stroke="#b0b0b0" stroke-width="0.8" />
<rect x="395.00" y="469.40" width="4.80" height="4.80" fill="none" stroke="#b4b4b4" stroke-width="0.8" />
<line x1="396.00" y1="471.80" x2="398.80" y2="471.80" stroke="#b0b0b0" stroke-width="0.8" />
<line x1="407.00" y1="469.60" x2="411.80" y2="474.00" stroke="#b0b0b0" stroke-width="0.8" />
<line x1="411.80" y1="469.60" x2="407.00" y2="474.00" stroke="#b0b0b0" stroke-width="0.8" />
<line x1="416.00" y1="469.60" x2="420.80" y2="474.00" stroke="#b0b0b0" stroke-width="0.8" />
<line x1="420.80" y1="469.60" x2="416.00" y2="474.00" stroke="#b0b0b0" stroke-width="0.8" />
<rect x="425.20" y="469.40" width="4.80" height="4.80" fill="none" stroke="#b4b4b4" stroke-width="0.8" />
<line x1="426.20" y1="471.80" x2="429.00" y2="471.80" stroke="#b0b0b0" stroke-width="0.8" />
<rect x="436.80" y="469.40" width="3.00" height="2.80" fill="#606060" />
<rect x="439.00" y="471.60" width="3.20" height="2.80" fill="#808080" />
<rect x="446.00" y="469.40" width="3.00" height="2.80" fill="#606060" />
<rect x="448.20" y="471.60" width="3.20" height="2.80" fill="#808080" />
<line x1="324.60" y1="467.40" x2="324.60" y2="477.00" stroke="#d2d2d2" stroke-width="0.8" />
<line x1="346.20" y1="467.40" x2="346.20" y2="477.00" stroke="#d2d2d2" stroke-width="0.8" />
<line x1="403.40" y1="467.40" x2="403.40" y2="477.00" stroke="#d2d2d2" stroke-width="0.8" />
<line x1="433.40" y1="467.40" x2="433.40" y2="477.00" stroke="#d2d2d2" stroke-width="0.8" />
<line x1="456.20" y1="466.40" x2="456.20" y2="478.00" stroke="#dcdcdc" stroke-width="0.8" />
<rect x="304.00" y="478.40" width="750.00" height="7.20" fill="#f0f0f0" />
<line x1="304.00" y1="478.50" x2="1054.00" y2="478.50" stroke="#e4e4e4" stroke-width="0.6" />
<text x="304.60" y="484.20" font-size="5.2" fill="#333" font-family='"Liberation Sans","Noto Sans CJK SC",sans-serif' font-weight="normal" text-anchor="start" >Ready</text>
<rect x="852.00" y="479.60" width="38.00" height="5.60" fill="#f4f4f4" stroke="#dadada" stroke-width="0.5" />
<rect x="892.00" y="479.60" width="41.00" height="5.60" fill="#f4f4f4" stroke="#dadada" stroke-width="0.5" />
<rect x="935.00" y="479.60" width="79.00" height="5.60" fill="#f4f4f4" stroke="#dadada" stroke-width="0.5" />
<rect x="1016.00" y="479.60" width="10.00" height="5.60" fill="#f4f4f4" stroke="#dadada" stroke-width="0.5" />
<rect x="1027.00" y="479.60" width="15.00" height="5.60" fill="#f4f4f4" stroke="#dadada" stroke-width="0.5" />
<rect x="1044.00" y="479.60" width="10.00" height="5.60" fill="#f4f4f4" stroke="#dadada" stroke-width="0.5" />
<text x="853.00" y="484.20" font-size="4.6" fill="#444" font-family='"Liberation Sans","Noto Sans CJK SC",sans-serif' font-weight="normal" text-anchor="start" >1.00,1.00</text>
<text x="893.00" y="484.20" font-size="4.6" fill="#444" font-family='"Liberation Sans","Noto Sans CJK SC",sans-serif' font-weight="normal" text-anchor="start" >1039,671</text>
<text x="1029.00" y="484.20" font-size="4.6" fill="#444" font-family='"Liberation Sans","Noto Sans CJK SC",sans-serif' font-weight="normal" text-anchor="start" >NUM</text>
<rect x="1020.80" y="109.80" width="31.40" height="104.00" fill="#ffffff" stroke="#d0d0d0" stroke-width="0.6" />
<text x="1024.00" y="117.30" font-size="4.8" fill="#999999" font-family='"Liberation Sans","Noto Sans CJK SC",sans-serif' font-weight="normal" text-anchor="start" >工具盒</text>
<rect x="1044.60" y="112.00" width="6.80" height="7.40" fill="#e2e2e2" />
<rect x="1049.80" y="124.00" width="2.20" height="89.00" fill="#ededed" />
<rect x="1023.70" y="123.40" width="7.20" height="7.20" fill="#f4f4f4" stroke="#d0d0d0" stroke-width="0.5" />
<polygon points="1024.70,130.00 1024.70,126.60 1029.90,128.00 1029.90,130.00" fill="#181830" />
<line x1="1025.70" y1="125.00" x2="1028.70" y2="125.80" stroke="#e04040" stroke-width="0.9" />
<line x1="1025.70" y1="126.20" x2="1028.70" y2="127.00" stroke="#4050e0" stroke-width="0.8" />
<line x1="1033.70" y1="129.80" x2="1039.30" y2="124.20" stroke="#2230a8" stroke-width="0.9" />
<line x1="1043.00" y1="127.00" x2="1048.20" y2="127.00" stroke="#2230a8" stroke-width="0.9" />
<line x1="1045.60" y1="124.20" x2="1045.60" y2="129.80" stroke="#2230a8" stroke-width="0.9" />
<rect x="1024.30" y="133.80" width="6.00" height="4.20" fill="none" stroke="#2230a8" stroke-width="0.9" />
<rect x="1033.50" y="133.80" width="6.00" height="4.20" fill="none" stroke="#2230a8" stroke-width="0.9" rx="1.8" />
<circle cx="1045.6" cy="135.8" r="2.9" fill="none" stroke="#2230a8" stroke-width="0.9"/>
<ellipse cx="1027.3" cy="144.7" rx="3.2" ry="1.8" fill="none" stroke="#2230a8" stroke-width="0.9"/>
<path d="M1033.5,146.1 q3,-4.6 6,0" fill="none" stroke="#2230a8" stroke-width="0.9"/>
<path d="M1043.8,142.29999999999998 h3.4 l-2.4,3 q-0.8,1.4 0.4,2.4" fill="none" stroke="#6878c8" stroke-width="0.8"/>
<polygon points="1027.30,150.80 1030.30,153.60 1029.50,153.60 1029.50,156.80 1025.10,156.80 1025.10,153.60 1024.30,153.60" fill="#fff" stroke="#2230a8" stroke-width="0.8" />
<text x="1036.50" y="156.70" font-size="8" fill="#2230a8" font-family='"Liberation Serif","Noto Serif CJK SC",serif' font-weight="bold" text-anchor="middle" >T</text>
<text x="1044.60" y="156.20" font-size="6" fill="#e03030" font-family='"Liberation Serif","Noto Serif CJK SC",serif' font-weight="bold" text-anchor="middle" >D</text>
<text x="1047.20" y="157.00" font-size="6" fill="#2230a8" font-family='"Liberation Serif","Noto Serif CJK SC",serif' font-weight="bold" text-anchor="middle" >T</text>
<text x="1027.30" y="165.10" font-size="5.4" fill="#2230a8" font-family='"Liberation Serif","Noto Serif CJK SC",serif' font-weight="bold" text-anchor="middle" >YC</text>
<text x="1036.50" y="165.10" font-size="5.4" fill="#2230a8" font-family='"Liberation Serif","Noto Serif CJK SC",serif' font-weight="bold" text-anchor="middle" >YX</text>
<rect x="1042.60" y="159.90" width="2.60" height="3.00" fill="#e04040" />
<rect x="1045.40" y="159.70" width="3.20" height="2.40" fill="#30b050" />
<rect x="1044.20" y="162.70" width="4.00" height="3.00" fill="#4060d0" />
<text x="1027.30" y="174.00" font-size="6" fill="#2230a8" font-family='"Liberation Sans","Noto Sans CJK SC",sans-serif' font-weight="bold" text-anchor="middle" >Q</text>
<line x1="1033.50" y1="168.80" x2="1033.50" y2="174.80" stroke="#333" stroke-width="0.7" />
<line x1="1033.50" y1="174.80" x2="1039.70" y2="174.80" stroke="#333" stroke-width="0.7" />
<polyline points="1034.1,172.8 1035.9,170.4 1037.5,171.8 1039.5,169.4" fill="none" stroke="#e03030" stroke-width="0.8"/>
<line x1="1034.10" y1="173.60" x2="1039.50" y2="173.60" stroke="#3050d0" stroke-width="0.7" />
<rect x="1042.60" y="168.80" width="1.30" height="6.00" fill="#d03030" />
<rect x="1044.20" y="169.80" width="1.30" height="5.00" fill="#3050d0" />
<rect x="1045.80" y="170.80" width="1.30" height="4.00" fill="#30a040" />
<rect x="1047.40" y="168.80" width="1.30" height="6.00" fill="#c0a020" />
<line x1="1024.30" y1="177.70" x2="1024.30" y2="183.70" stroke="#333" stroke-width="0.7" />
<line x1="1024.30" y1="183.70" x2="1030.50" y2="183.70" stroke="#333" stroke-width="0.7" />
<polyline points="1024.8999999999999,181.7 1026.7,179.29999999999998 1028.3,180.7 1030.3,178.29999999999998" fill="none" stroke="#e03030" stroke-width="0.8"/>
<line x1="1024.90" y1="182.50" x2="1030.30" y2="182.50" stroke="#3050d0" stroke-width="0.7" />
<ellipse cx="1036.5" cy="180.7" rx="2.8" ry="1.6" fill="#f4d0d0" stroke="#c04040" stroke-width="0.5"/>
<circle cx="1036.1" cy="180.7" r="0.9" fill="#222"/>
<circle cx="1045.6" cy="180.7" r="2.4" fill="#e05020"/>
<circle cx="1045.6" cy="180.7" r="3.3" fill="none" stroke="#e0a020" stroke-width="0.7" stroke-dasharray="1 1"/>
<rect x="1024.10" y="187.40" width="6.40" height="4.60" fill="#fff" stroke="#222" stroke-width="1" />
<rect x="1033.50" y="186.80" width="2.60" height="3.00" fill="#e04040" />
<rect x="1036.30" y="186.60" width="3.20" height="2.40" fill="#30b050" />
<rect x="1035.10" y="189.60" width="4.00" height="3.00" fill="#4060d0" />
<rect x="1042.60" y="186.60" width="2.40" height="3.40" fill="#222" />
<rect x="1045.80" y="187.00" width="2.60" height="2.80" fill="#d03030" />
<rect x="1044.60" y="190.20" width="4.00" height="2.60" fill="#10a090" />
<rect x="1024.70" y="195.80" width="5.20" height="6.20" fill="#3848c0" />
<line x1="1025.70" y1="197.20" x2="1028.90" y2="197.20" stroke="#e0e4ff" stroke-width="0.6" />
<line x1="1025.70" y1="199.00" x2="1028.90" y2="199.00" stroke="#e0e4ff" stroke-width="0.6" />
<line x1="1025.70" y1="200.80" x2="1028.90" y2="200.80" stroke="#e0e4ff" stroke-width="0.6" />
<ellipse cx="1036.5" cy="197.4" rx="2" ry="1.4" fill="none" stroke="#5060c8" stroke-width="0.7"/>
<ellipse cx="1036.5" cy="200.20000000000002" rx="2" ry="1.4" fill="none" stroke="#5060c8" stroke-width="0.7"/>
<rect x="1042.40" y="196.20" width="6.40" height="5.60" fill="#182058" />
<polygon points="1042.60,201.60 1045.00,197.80 1046.60,199.80 1047.60,198.80 1048.60,201.60" fill="#d0d0d8" />
<rect x="1042.60" y="196.20" width="4.00" height="1.00" fill="#e8b020" />
<rect x="1024.30" y="205.50" width="2.20" height="2.80" fill="#e03030" />
<text x="1028.50" y="210.90" font-size="6.4" fill="#2030a0" font-family='"Liberation Sans","Noto Sans CJK SC",sans-serif' font-weight="bold" text-anchor="middle" >F</text>
<rect x="1026.10" y="207.30" width="1.40" height="1.60" fill="#30b050" />
<line x1="1033.50" y1="204.90" x2="1033.50" y2="210.90" stroke="#333" stroke-width="0.7" />
<line x1="1033.50" y1="210.90" x2="1039.70" y2="210.90" stroke="#333" stroke-width="0.7" />
<polyline points="1034.1,208.9 1035.9,206.5 1037.5,207.9 1039.5,205.5" fill="none" stroke="#e03030" stroke-width="0.8"/>
<line x1="1034.10" y1="209.70" x2="1039.50" y2="209.70" stroke="#3050d0" stroke-width="0.7" />
<rect x="1042.40" y="205.30" width="6.40" height="5.40" fill="#d8dcf0" />
<line x1="1042.60" y1="205.70" x2="1048.60" y2="210.30" stroke="#e02020" stroke-width="1" />
<line x1="1042.60" y1="210.30" x2="1048.60" y2="205.70" stroke="#2030b0" stroke-width="1" />
</svg>
</body></html>
